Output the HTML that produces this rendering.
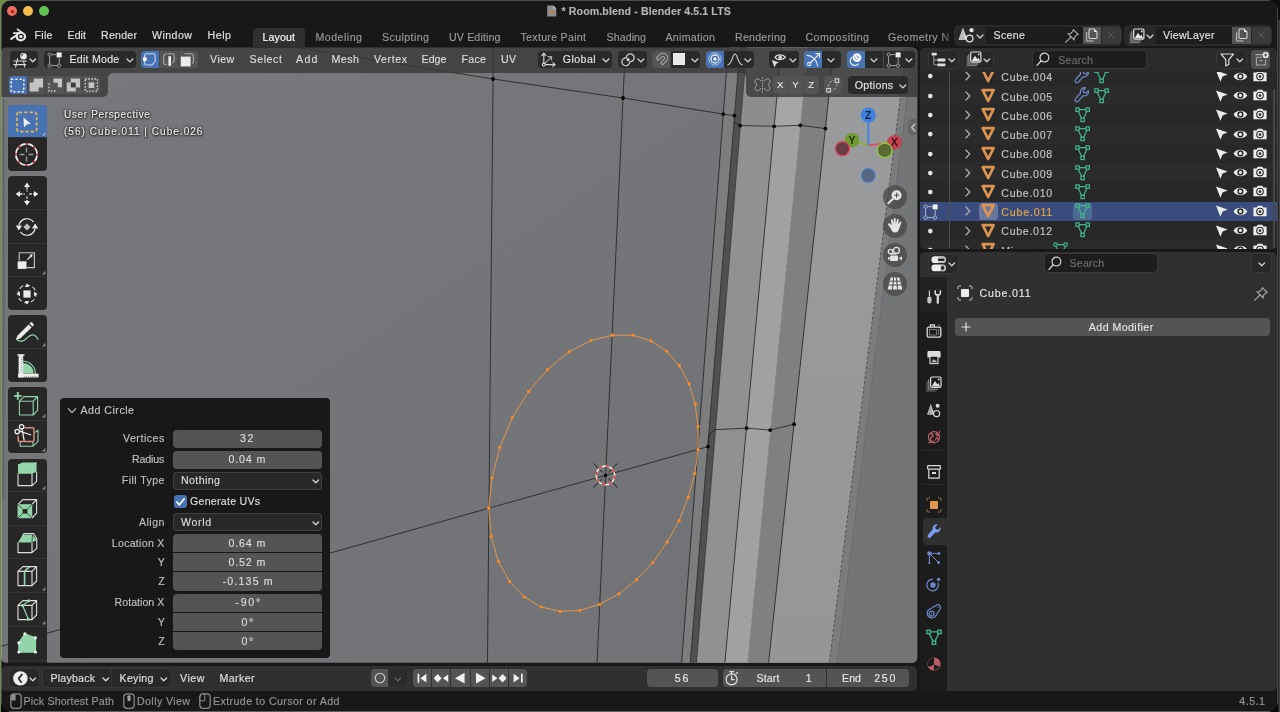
<!DOCTYPE html>
<html lang="en"><head><meta charset="utf-8"><title>Room.blend - Blender 4.5.1 LTS</title>
<style>
html,body{margin:0;padding:0;}
body{width:1280px;height:712px;overflow:hidden;position:relative;background:#15171c;font-family:"Liberation Sans",sans-serif;}
#desk{position:absolute;left:0;top:0;width:1280px;height:712px;background:linear-gradient(90deg,#718a4a 0,#718a4a 1px,rgba(0,0,0,0) 1px,rgba(0,0,0,0) 1278px,#2a2a2c 1278px,#2a2a2c 1279px,#44443e 1279px),linear-gradient(180deg,#718a4a 0,#718a4a 14px,#0a0a0a 14px,#0a0a0a 698px,#0a0a0a 698px);}
#desk2{position:absolute;left:640px;top:0;width:640px;height:20px;background:#0e0e0e;}
#win{position:absolute;left:0;top:0;width:1280px;height:712px;background:#181818;will-change:transform;clip-path:inset(0px 2px 0px 1px round 11px);overflow:hidden;}
#win div,#win span,#win svg{position:absolute;display:block;}
#win svg{overflow:visible;}
.t{white-space:nowrap;line-height:16px;height:16px;-webkit-text-stroke:0.14px;}
</style></head>
<body><div id="desk"></div><div id="desk2"></div><div id="win">
<svg style="left:0;top:0" width="1280" height="712" viewBox="0 0 1280 712"><defs><linearGradient id="gm" x1="0" y1="0" x2="1" y2="1"><stop offset="0" stop-color="#77787b"/><stop offset="1" stop-color="#717275"/></linearGradient><linearGradient id="gr" x1="0" y1="0" x2="0" y2="1"><stop offset="0" stop-color="#9a9b9c"/><stop offset="1" stop-color="#959697"/></linearGradient><clipPath id="vpc"><rect x="1" y="47.7" width="916.2" height="615.1" rx="5"/></clipPath></defs><g clip-path="url(#vpc)"><rect x="0" y="44" width="920" height="624" fill="url(#gm)"/><polygon points="728.6,44 740.3,44 689.8,668 681.2,668" fill="#7c7d7f" /><polygon points="740.3,44 747.0,44 696.0,668 689.8,668" fill="#505051" /><polygon points="747.0,44 781.7,44 724.4,668 696.0,668" fill="#909193" /><polygon points="781.7,44 808.2,44 746.9,668 724.4,668" fill="#a0a1a2" /><polygon points="808.2,44 834.4,44 768.1,668 746.9,668" fill="#7f8081" /><polygon points="834.4,44 907.0,44 828.6,668 768.1,668" fill="url(#gr)" /><polygon points="907.0,44 913.8,44 836.5,668 828.6,668" fill="#7b7c7e" /><polygon points="747.0,44 781.7,44 774.1,126.3 740.2,125.6" fill="#8c8d8f"/><polygon points="781.7,44 808.2,44 800.2,125.3 774.1,126.3" fill="#a4a5a6"/><polygon points="808.2,44 834.4,44 825.4,128.6 800.2,125.3" fill="#7b7c7d"/><polygon points="913.8,44 920,44 920,668 836.5,668" fill="#747576"/><rect x="1.4" y="99" width="3.8" height="402" rx="1.9" fill="#6a6b6d"/><line x1="493.4" y1="44" x2="487.4" y2="668" stroke="#1a1a1a" stroke-width="0.75" fill="none"/><line x1="625.5" y1="44" x2="596.8" y2="668" stroke="#1a1a1a" stroke-width="0.75" fill="none"/><line x1="728.6" y1="44" x2="681.2" y2="668" stroke="#1a1a1a" stroke-width="0.75" fill="none"/><line x1="781.7" y1="44" x2="724.4" y2="668" stroke="#1a1a1a" stroke-width="0.75" fill="none"/><line x1="834.4" y1="44" x2="768.1" y2="668" stroke="#1a1a1a" stroke-width="0.75" fill="none"/><line x1="740.3" y1="44" x2="689.8" y2="668" stroke="#2a2a2a" stroke-width="0.8" fill="none"/><line x1="747.0" y1="44" x2="696.0" y2="668" stroke="#333" stroke-width="0.8" fill="none"/><line x1="808.2" y1="44" x2="746.9" y2="668" stroke="#c8c8c8" stroke-width="0.8" stroke-dasharray="3 2" fill="none" opacity="0.38"/><line x1="907.0" y1="44" x2="828.6" y2="668" stroke="#454545" stroke-width="0.8" stroke-dasharray="2.6 2.4" fill="none"/><line x1="913.8" y1="44" x2="836.5" y2="668" stroke="#68696b" stroke-width="0.7" fill="none"/><polyline points="290,46.4 493,79 623,98 723.3,114.1 734.5,115.7" stroke="#1a1a1a" stroke-width="0.75" fill="none"/><polyline points="733.8,122.2 740.2,125.6 774.1,126.3 800.2,125.3 825.4,128.6" stroke="#1a1a1a" stroke-width="0.75" fill="none"/><polyline points="0,646.5 488.8,508.2 708,446.6 709.3,434.2 715.1,429.6 746.6,428.2 770.2,430.1 794.1,424.2" stroke="#1a1a1a" stroke-width="0.75" fill="none"/><circle cx="493" cy="79" r="1.9" fill="#000"/><circle cx="623" cy="98" r="1.9" fill="#000"/><circle cx="723.3" cy="114.1" r="1.9" fill="#000"/><circle cx="734.5" cy="115.7" r="1.9" fill="#000"/><circle cx="740.2" cy="125.6" r="1.9" fill="#000"/><circle cx="774.1" cy="126.3" r="1.9" fill="#000"/><circle cx="800.2" cy="125.3" r="1.9" fill="#000"/><circle cx="825.4" cy="128.6" r="1.9" fill="#000"/><circle cx="708" cy="446.6" r="1.9" fill="#000"/><circle cx="746.6" cy="428.2" r="1.9" fill="#000"/><circle cx="770.2" cy="430.1" r="1.9" fill="#000"/><circle cx="794.1" cy="424.2" r="1.9" fill="#000"/><line x1="608.7" y1="478.6" x2="617.5" y2="487.4" stroke="#1a1a1a" stroke-width="1"/><line x1="602.3" y1="478.6" x2="593.5" y2="487.4" stroke="#1a1a1a" stroke-width="1"/><line x1="602.3" y1="472.2" x2="593.5" y2="463.4" stroke="#1a1a1a" stroke-width="1"/><line x1="608.7" y1="472.2" x2="617.5" y2="463.4" stroke="#1a1a1a" stroke-width="1"/><circle cx="605.5" cy="475.4" r="9.3" fill="none" stroke="#f2f2f2" stroke-width="1.5"/><circle cx="605.5" cy="475.4" r="9.3" fill="none" stroke="#e8413a" stroke-width="1.5" stroke-dasharray="3.65 3.65"/><circle cx="605.5" cy="475.4" r="1.7" fill="#000"/><polygon points="612.2,335.2 632.7,335.2 651,340.9 666.6,351.1 679.3,365.7 689,383.7 695.2,404.2 698.1,426.5 698.1,449.7 694.8,473.6 688.2,497.3 679.1,520.7 667.1,542.2 652.7,562.7 636.6,579.7 619,593.8 599.6,604.4 579.9,610.3 560.2,611.4 541.2,607 524.2,597 509.6,581.6 498.4,561.5 491.2,536.4 488.8,508.2 492,477.8 499.8,447.5 512.1,417.8 528.8,391.3 547.7,369.3 569,351.8 591,340.5" fill="none" stroke="#e0964a" stroke-width="1" stroke-linejoin="round"/><circle cx="612.2" cy="335.2" r="1.6" fill="#ff8a1e"/><circle cx="632.7" cy="335.2" r="1.6" fill="#ff8a1e"/><circle cx="651" cy="340.9" r="1.6" fill="#ff8a1e"/><circle cx="666.6" cy="351.1" r="1.6" fill="#ff8a1e"/><circle cx="679.3" cy="365.7" r="1.6" fill="#ff8a1e"/><circle cx="689" cy="383.7" r="1.6" fill="#ff8a1e"/><circle cx="695.2" cy="404.2" r="1.6" fill="#ff8a1e"/><circle cx="698.1" cy="426.5" r="1.6" fill="#ff8a1e"/><circle cx="698.1" cy="449.7" r="1.6" fill="#ff8a1e"/><circle cx="694.8" cy="473.6" r="1.6" fill="#ff8a1e"/><circle cx="688.2" cy="497.3" r="1.6" fill="#ff8a1e"/><circle cx="679.1" cy="520.7" r="1.6" fill="#ff8a1e"/><circle cx="667.1" cy="542.2" r="1.6" fill="#ff8a1e"/><circle cx="652.7" cy="562.7" r="1.6" fill="#ff8a1e"/><circle cx="636.6" cy="579.7" r="1.6" fill="#ff8a1e"/><circle cx="619" cy="593.8" r="1.6" fill="#ff8a1e"/><circle cx="599.6" cy="604.4" r="1.6" fill="#ff8a1e"/><circle cx="579.9" cy="610.3" r="1.6" fill="#ff8a1e"/><circle cx="560.2" cy="611.4" r="1.6" fill="#ff8a1e"/><circle cx="541.2" cy="607" r="1.6" fill="#ff8a1e"/><circle cx="524.2" cy="597" r="1.6" fill="#ff8a1e"/><circle cx="509.6" cy="581.6" r="1.6" fill="#ff8a1e"/><circle cx="498.4" cy="561.5" r="1.6" fill="#ff8a1e"/><circle cx="491.2" cy="536.4" r="1.6" fill="#ff8a1e"/><circle cx="488.8" cy="508.2" r="1.6" fill="#ff8a1e"/><circle cx="492" cy="477.8" r="1.6" fill="#ff8a1e"/><circle cx="499.8" cy="447.5" r="1.6" fill="#ff8a1e"/><circle cx="512.1" cy="417.8" r="1.6" fill="#ff8a1e"/><circle cx="528.8" cy="391.3" r="1.6" fill="#ff8a1e"/><circle cx="547.7" cy="369.3" r="1.6" fill="#ff8a1e"/><circle cx="569" cy="351.8" r="1.6" fill="#ff8a1e"/><circle cx="591" cy="340.5" r="1.6" fill="#ff8a1e"/></g></svg>
<span class="t" style="left:64px;top:106.5px;font-size:10.04px;color:#f0f0f0;letter-spacing:0.637px;text-shadow:0 0 2px rgba(0,0,0,0.95),0 0 3px rgba(0,0,0,0.6),0.5px 1px 2px rgba(0,0,0,0.7);">User Perspective</span>
<span class="t" style="left:64px;top:124px;font-size:10.04px;color:#f0f0f0;letter-spacing:1.014px;text-shadow:0 0 2px rgba(0,0,0,0.95),0 0 3px rgba(0,0,0,0.6),0.5px 1px 2px rgba(0,0,0,0.7);">(56) Cube.011 | Cube.026</span>
<svg style="left:0;top:0" width="1280" height="712" viewBox="0 0 1280 712"><line x1="868.3" y1="145.3" x2="894.5" y2="142.4" stroke="#e4505e" stroke-width="1.8"/><line x1="868.3" y1="145.3" x2="851.9" y2="140.2" stroke="#86b832" stroke-width="1.8"/><line x1="868.3" y1="145.3" x2="868.3" y2="115.2" stroke="#3f86e6" stroke-width="1.8"/><circle cx="868.3" cy="175.5" r="6.9" fill="#596680" stroke="#4a80d2" stroke-width="1.1"/><circle cx="894.5" cy="142.4" r="7.3" fill="#c2414f"/><circle cx="851.9" cy="140.2" r="7.3" fill="#6d9b2c"/><circle cx="868.3" cy="115.2" r="7.6" fill="#3f82dd"/><circle cx="842.4" cy="148.7" r="7.1" fill="#693d45" stroke="#e4495c" stroke-width="1.2"/><circle cx="884.7" cy="150.3" r="7.3" fill="#5a6a35" stroke="#8fca3a" stroke-width="1.3"/><text x="868.3" y="119" text-anchor="middle" fill="#14233f" style="font-family:&quot;Liberation Sans&quot;,sans-serif;font-size:10.5px;font-weight:700;">Z</text><text x="851.9" y="144" text-anchor="middle" fill="#1f2f08" style="font-family:&quot;Liberation Sans&quot;,sans-serif;font-size:10.5px;font-weight:700;">Y</text><text x="894.6" y="146.2" text-anchor="middle" fill="#3d0d14" style="font-family:&quot;Liberation Sans&quot;,sans-serif;font-size:10.5px;font-weight:700;">X</text></svg>
<div style="left:883.2px;top:184.8px;width:24.2px;height:24.2px;background:rgba(72,72,72,0.74);border-radius:12.1px;"></div>
<div style="left:883.2px;top:213.8px;width:24.2px;height:24.2px;background:rgba(72,72,72,0.74);border-radius:12.1px;"></div>
<div style="left:883.2px;top:242.9px;width:24.2px;height:24.2px;background:rgba(72,72,72,0.74);border-radius:12.1px;"></div>
<div style="left:883.2px;top:271.7px;width:24.2px;height:24.2px;background:rgba(72,72,72,0.74);border-radius:12.1px;"></div>
<svg style="left:885.3px;top:186.9px;" width="20" height="20" viewBox="0 0 20 20"><circle cx="11.6" cy="8.2" r="5" fill="#e4e4e4"/><path d="M7.8 12 L3.2 16.4" stroke="#e4e4e4" stroke-width="2" stroke-linecap="round"/><path d="M11.6 5.6 V10.8 M9 8.2 H14.2" stroke="#4a4a4a" stroke-width="1"/></svg>
<svg style="left:885.3px;top:215.9px;" width="20" height="20" viewBox="0 0 20 20"><path d="M5.2 11.4 L3 8.8 a1.1 1.1 0 0 1 1.7 -1.3 L6.6 9.2 L6 4.2 a0.9 0.9 0 0 1 1.8 -0.2 L8.6 8 L8.8 2.8 a0.9 0.9 0 0 1 1.8 0 L10.8 8 L12 3.6 a0.9 0.9 0 0 1 1.8 0.4 L13 8.6 L14.8 6 a0.9 0.9 0 0 1 1.6 0.8 L14.4 12 C13.6 15 12.4 16.6 10 16.6 C7.6 16.6 6.4 14.2 5.2 11.4z" fill="#e4e4e4"/></svg>
<svg style="left:885.3px;top:245px;" width="20" height="20" viewBox="0 0 20 20"><g fill="none" stroke="#e4e4e4" stroke-width="1.3"><circle cx="5.6" cy="6.6" r="2.3"/><circle cx="11.4" cy="5.4" r="3"/><path d="M5.6 9 H11.4"/></g><rect x="5" y="10.6" width="8" height="5.4" rx="1" fill="#e4e4e4"/><path d="M13.8 13.2 L17 11.2 V15.4z" fill="#e4e4e4"/><rect x="3" y="12" width="1.6" height="2.6" fill="#e4e4e4"/></svg>
<svg style="left:885.3px;top:273.8px;" width="20" height="20" viewBox="0 0 20 20"><path d="M5.6 3.6 H14.4 L17.4 15.6 H2.6z" fill="#e4e4e4"/><path d="M8.6 3.6 L7.4 15.6 M11.4 3.6 L12.6 15.6 M4.8 7.2 H15.2 M3.8 11 H16.2" stroke="#4a4a4a" stroke-width="1"/></svg>
<div style="left:908.4px;top:118.7px;width:8.8px;height:16.6px;background:rgba(100,100,100,0.85);border-radius:4px 0 0 4px;"></div>
<svg style="left:909.6px;top:122.5px;" width="7" height="9" viewBox="0 0 7 9"><path d="M5 1 L1.6 4.5 L5 8" fill="none" stroke="#c9c9c9" stroke-width="1.2" stroke-linecap="round" stroke-linejoin="round"/></svg>
<div style="left:1.3px;top:47.6px;width:915.8px;height:25.8px;background:rgba(56,56,56,0.8);border-radius:5px 5px 0 0;"></div>
<div style="left:1.3px;top:73.4px;width:107px;height:23.2px;background:rgba(56,56,56,0.8);border-radius:0 0 5px 0;"></div>
<div style="left:745.6px;top:73.4px;width:171.5px;height:23.2px;background:rgba(56,56,56,0.8);border-radius:0 0 0 5px;"></div>
<div style="left:108.3px;top:73.4px;width:5px;height:5px;background:radial-gradient(circle at 100% 100%,rgba(0,0,0,0) 4.6px,rgba(56,56,56,0.8) 5.2px);"></div>
<div style="left:740.6px;top:73.4px;width:5px;height:5px;background:radial-gradient(circle at 0% 100%,rgba(0,0,0,0) 4.6px,rgba(56,56,56,0.8) 5.2px);"></div>
<div style="left:9.75px;top:50.9px;width:28.4px;height:17px;background:#2a2a2a;border-radius:4px;"></div>
<svg style="left:12.5px;top:51.5px;" width="17" height="16" viewBox="0 0 17 16"><g stroke="#d9d9d9" stroke-width="1.1" fill="none" stroke-linecap="round"><path d="M1 9 H13.4 M0.6 12.6 H12.8 M4.6 6.6 L2.6 15 M10.6 9 L11.6 15"/></g><circle cx="10.5" cy="4.3" r="3.3" fill="#e8e8e8"/><path d="M8.4 4.4 A2.2 2.2 0 0 1 10.4 2.2" stroke="#2a2a2a" stroke-width="0.9" fill="none"/></svg>
<svg style="left:29px;top:57.8px;" width="7.6" height="4.8" viewBox="0 0 7.6 4.8"><path d="M1 1 L3.8 3.8 L6.6 1" fill="none" stroke="#d8d8d8" stroke-width="1.3" stroke-linecap="round" stroke-linejoin="round"/></svg>
<div style="left:44.4px;top:50.9px;width:91.2px;height:17px;background:#2a2a2a;border-radius:4px;"></div>
<svg style="left:46.5px;top:52px;" width="16" height="16" viewBox="0 0 16 16"><g fill="none" stroke="#a6a6a6" stroke-width="0.95"><path d="M2.6 4.3 V11.9 M4.3 13.6 H10.3 M12.2 6 V11.9 M4.3 2.6 H9"/><circle cx="2.6" cy="2.6" r="1.6"/><circle cx="2.6" cy="13.6" r="1.6"/><circle cx="12" cy="13.6" r="1.6"/></g><rect x="9.6" y="0.4" width="5" height="5" fill="#f2f2f2"/></svg>
<span class="t" style="left:69.5px;top:51.4px;font-size:10.62px;color:#e4e4e4;letter-spacing:0.248px;">Edit Mode</span>
<svg style="left:126.3px;top:57.75px;" width="7.8" height="4.9" viewBox="0 0 7.8 4.9"><path d="M1 1 L3.9 3.9 L6.8 1" fill="none" stroke="#d8d8d8" stroke-width="1.3" stroke-linecap="round" stroke-linejoin="round"/></svg>
<div style="left:141.3px;top:50.9px;width:17.8px;height:17px;background:#4772b3;border-radius:4px 0 0 4px;"></div>
<div style="left:159.6px;top:50.9px;width:18.4px;height:17px;background:#545454;"></div>
<div style="left:178.5px;top:50.9px;width:19px;height:17px;background:#545454;border-radius:0 4px 4px 0;"></div>
<svg style="left:143.2px;top:53px;" width="14" height="13" viewBox="0 0 14 13"><path d="M3.2 0.8 H10.6 a1.6 1.6 0 0 1 1.6 1.6 V8.6 L9 12 H3.2 a1.6 1.6 0 0 1 -1.6 -1.6 V2.4 a1.6 1.6 0 0 1 1.6 -1.6z" fill="none" stroke="#c9d6ec" stroke-width="1.1"/><rect x="0" y="4.4" width="3.6" height="3.6" fill="#fff"/></svg>
<svg style="left:161.5px;top:53px;" width="14" height="13" viewBox="0 0 14 13"><path d="M5.4 0.8 H10.6 a1.6 1.6 0 0 1 1.6 1.6 V7.6 L10.6 10.2 M4.6 11.4 H3.2 a1.6 1.6 0 0 1 -1.6 -1.6 V4 A3.2 3.2 0 0 1 4.8 0.8" fill="none" stroke="#a8a8a8" stroke-width="1.1"/><rect x="6.4" y="3.2" width="2.6" height="9.6" fill="#f4f4f4"/></svg>
<svg style="left:180.4px;top:52.6px;" width="15" height="14" viewBox="0 0 15 14"><path d="M4.6 0.8 H11.8 a1.6 1.6 0 0 1 1.6 1.6 V9 L12 10.4" fill="none" stroke="#a8a8a8" stroke-width="1.1"/><rect x="0.8" y="3.6" width="9.8" height="9.8" fill="#ececec"/></svg>
<span class="t" style="left:210px;top:51.3px;font-size:10.62px;color:#dedede;letter-spacing:0.491px;">View</span>
<span class="t" style="left:249.5px;top:51.3px;font-size:10.62px;color:#dedede;letter-spacing:0.597px;">Select</span>
<span class="t" style="left:296px;top:51.3px;font-size:10.62px;color:#dedede;letter-spacing:1.302px;">Add</span>
<span class="t" style="left:331.5px;top:51.3px;font-size:10.62px;color:#dedede;letter-spacing:0.510px;">Mesh</span>
<span class="t" style="left:374px;top:51.3px;font-size:10.62px;color:#dedede;letter-spacing:0.578px;">Vertex</span>
<span class="t" style="left:421.5px;top:51.3px;font-size:10.62px;color:#dedede;letter-spacing:0.066px;">Edge</span>
<span class="t" style="left:461.5px;top:51.3px;font-size:10.62px;color:#dedede;letter-spacing:0.297px;">Face</span>
<span class="t" style="left:501px;top:51.3px;font-size:10.62px;color:#dedede;letter-spacing:0.247px;">UV</span>
<div style="left:538.1px;top:50.9px;width:73.8px;height:17px;background:#2a2a2a;border-radius:4px;"></div>
<svg style="left:541px;top:52px;" width="16" height="16" viewBox="0 0 16 16"><g fill="none" stroke="#d6d6d6" stroke-width="1.1" stroke-linecap="round" stroke-linejoin="round"><path d="M2.8 12.6 V1.6 M0.8 3.6 L2.8 1.2 L4.8 3.6 M2.8 12.6 H14 M11.8 10.6 L14.2 12.6 L11.8 14.6"/><path d="M3.6 11.8 L10.2 5.2 M7 4.6 H10.6 V8.2" stroke="#a8a8a8"/><circle cx="2.8" cy="12.6" r="1.5" fill="#2a2a2a"/></g></svg>
<span class="t" style="left:562.8px;top:51.4px;font-size:10.62px;color:#e4e4e4;letter-spacing:0.420px;">Global</span>
<svg style="left:602.4px;top:57.75px;" width="7.8" height="4.9" viewBox="0 0 7.8 4.9"><path d="M1 1 L3.9 3.9 L6.8 1" fill="none" stroke="#d8d8d8" stroke-width="1.3" stroke-linecap="round" stroke-linejoin="round"/></svg>
<div style="left:617.5px;top:50.9px;width:29px;height:17px;background:#2a2a2a;border-radius:4px;"></div>
<svg style="left:620px;top:52px;" width="16" height="16" viewBox="0 0 16 16"><g fill="none" stroke="#d6d6d6" stroke-width="1.2"><path d="M6.2 6 A3.9 3.9 0 1 0 9.6 9.4"/><path d="M9.8 9.6 A3.9 3.9 0 1 0 6.4 6.2"/></g><circle cx="8.1" cy="7.7" r="1.4" fill="#fff"/></svg>
<svg style="left:637.1px;top:57.75px;" width="7.8" height="4.9" viewBox="0 0 7.8 4.9"><path d="M1 1 L3.9 3.9 L6.8 1" fill="none" stroke="#d8d8d8" stroke-width="1.3" stroke-linecap="round" stroke-linejoin="round"/></svg>
<div style="left:651.9px;top:50.9px;width:18.3px;height:17px;background:#545454;border-radius:4px 0 0 4px;"></div>
<div style="left:670.6px;top:50.9px;width:29.4px;height:17px;background:#2a2a2a;border-radius:0 4px 4px 0;"></div>
<svg style="left:653.5px;top:52.4px;" width="15" height="14" viewBox="0 0 15 14"><path d="M2 6.2 L5.8 2.6 A4.6 4.6 0 0 1 12.4 9 L8.6 12.8 L6.6 10.8 L10.2 7.2 A1.7 1.7 0 0 0 7.8 4.8 L4 8.4z" fill="none" stroke="#a6a6a6" stroke-width="1.1" stroke-linejoin="round"/></svg>
<div style="left:672.8px;top:53px;width:12.2px;height:11.7px;background:#e9e9e9;"></div>
<svg style="left:690.7px;top:57.75px;" width="7.8" height="4.9" viewBox="0 0 7.8 4.9"><path d="M1 1 L3.9 3.9 L6.8 1" fill="none" stroke="#d8d8d8" stroke-width="1.3" stroke-linecap="round" stroke-linejoin="round"/></svg>
<div style="left:706px;top:50.9px;width:17.7px;height:17px;background:#4772b3;border-radius:4px 0 0 4px;"></div>
<div style="left:724.1px;top:50.9px;width:30px;height:17px;background:#2a2a2a;border-radius:0 4px 4px 0;"></div>
<svg style="left:707.8px;top:52.4px;" width="14" height="14" viewBox="0 0 14 14"><circle cx="7" cy="7" r="6.2" fill="none" stroke="#b7c9e8" stroke-width="0.9"/><circle cx="7" cy="7" r="4" fill="none" stroke="#e8eefa" stroke-width="1.3"/><circle cx="7" cy="7" r="1.7" fill="#fff"/></svg>
<svg style="left:726.5px;top:53px;" width="16" height="13" viewBox="0 0 16 13"><path d="M0.8 11.8 C5 11.8 5.4 1 8 1 C10.6 1 11 11.8 15.2 11.8" fill="none" stroke="#d6d6d6" stroke-width="1.1" stroke-linecap="round"/></svg>
<svg style="left:744.1px;top:57.75px;" width="7.8" height="4.9" viewBox="0 0 7.8 4.9"><path d="M1 1 L3.9 3.9 L6.8 1" fill="none" stroke="#d8d8d8" stroke-width="1.3" stroke-linecap="round" stroke-linejoin="round"/></svg>
<div style="left:769.4px;top:50.9px;width:29.2px;height:17px;background:#2a2a2a;border-radius:4px;"></div>
<svg style="left:771px;top:51.6px;" width="18" height="17" viewBox="0 0 18 17"><path d="M4 5.2 C6 2 12 2 14.4 5.2 C12 8.4 6 8.4 4 5.2z" fill="none" stroke="#e0e0e0" stroke-width="1.2"/><circle cx="9.2" cy="5.2" r="1.7" fill="#e0e0e0"/><path d="M0.8 8 L8 10.6 L5 11.8 L3.6 15.4z" fill="#e0e0e0"/></svg>
<svg style="left:788.9px;top:57.75px;" width="7.8" height="4.9" viewBox="0 0 7.8 4.9"><path d="M1 1 L3.9 3.9 L6.8 1" fill="none" stroke="#d8d8d8" stroke-width="1.3" stroke-linecap="round" stroke-linejoin="round"/></svg>
<div style="left:804px;top:50.9px;width:17.9px;height:17px;background:#4772b3;border-radius:4px 0 0 4px;"></div>
<div style="left:822.3px;top:50.9px;width:19px;height:17px;background:#2a2a2a;border-radius:0 4px 4px 0;"></div>
<svg style="left:805.6px;top:52px;" width="15" height="15" viewBox="0 0 15 15"><g fill="none" stroke="#e6ecf8" stroke-width="1.1" stroke-linecap="round" stroke-linejoin="round"><path d="M1.2 3.4 C6 3.4 11 8 11.6 13.6"/><path d="M4.2 11 L13.4 1.8 M9.8 1.6 H13.6 V5.4"/><circle cx="3.2" cy="12" r="1.6" fill="#4772b3"/></g></svg>
<svg style="left:827.4px;top:57.75px;" width="7.8" height="4.9" viewBox="0 0 7.8 4.9"><path d="M1 1 L3.9 3.9 L6.8 1" fill="none" stroke="#d8d8d8" stroke-width="1.3" stroke-linecap="round" stroke-linejoin="round"/></svg>
<div style="left:846.6px;top:50.9px;width:18px;height:17px;background:#4772b3;border-radius:4px 0 0 4px;"></div>
<div style="left:865px;top:50.9px;width:18px;height:17px;background:#2a2a2a;"></div>
<div style="left:883.5px;top:50.9px;width:31px;height:17px;background:#2a2a2a;border-radius:0 4px 4px 0;"></div>
<svg style="left:848.3px;top:52px;" width="15" height="15" viewBox="0 0 15 15"><circle cx="9" cy="5.6" r="4.4" fill="#f2f5fb"/><path d="M4.4 5 A4.6 4.6 0 1 0 10.6 11.6" fill="none" stroke="#e6ecf8" stroke-width="1.2"/><path d="M6.6 5.4 L8.8 7.6 M8.6 3.6 L11 6" stroke="#4772b3" stroke-width="1"/></svg>
<svg style="left:870.1px;top:57.75px;" width="7.8" height="4.9" viewBox="0 0 7.8 4.9"><path d="M1 1 L3.9 3.9 L6.8 1" fill="none" stroke="#d8d8d8" stroke-width="1.3" stroke-linecap="round" stroke-linejoin="round"/></svg>
<svg style="left:885.5px;top:52px;" width="16" height="16" viewBox="0 0 16 16"><g fill="none" stroke="#a6a6a6" stroke-width="0.95"><path d="M2.6 4.3 V11.9 M4.3 13.6 H10.3 M12.2 6 V11.9 M4.3 2.6 H9"/><circle cx="2.6" cy="2.6" r="1.6"/><circle cx="2.6" cy="13.6" r="1.6"/><circle cx="12" cy="13.6" r="1.6"/></g><rect x="9.6" y="0.4" width="5" height="5" fill="#f2f2f2"/></svg>
<svg style="left:904.5px;top:57.75px;" width="7.8" height="4.9" viewBox="0 0 7.8 4.9"><path d="M1 1 L3.9 3.9 L6.8 1" fill="none" stroke="#d8d8d8" stroke-width="1.3" stroke-linecap="round" stroke-linejoin="round"/></svg>
<div style="left:9px;top:76.3px;width:18.2px;height:17.5px;background:#4772b3;border-radius:4px 0 0 4px;"></div>
<div style="left:27.8px;top:76.3px;width:17.6px;height:17.5px;background:#545454;"></div>
<div style="left:46.2px;top:76.3px;width:17.6px;height:17.5px;background:#545454;"></div>
<div style="left:64.6px;top:76.3px;width:17.6px;height:17.5px;background:#545454;"></div>
<div style="left:83px;top:76.3px;width:17.2px;height:17.5px;background:#545454;border-radius:0 4px 4px 0;"></div>
<svg style="left:10.4px;top:77.6px;" width="15" height="15" viewBox="0 0 15 15"><rect x="1.2" y="1.2" width="12.6" height="12.6" stroke="#f0f0f0" stroke-width="1.6" stroke-dasharray="2.1 2.1" fill="none"/></svg>
<svg style="left:29px;top:78px;" width="15" height="14" viewBox="0 0 15 14"><path d="M4.6 0.6 H14 V9.4 H9.6 V13.6 H0.6 V4.6 H4.6z" fill="#c4c4c4"/></svg>
<svg style="left:47.6px;top:78px;" width="15" height="14" viewBox="0 0 15 14"><path d="M5.4 0.6 H14 V9.2 H9.8 V4.8 H5.4z" fill="#c4c4c4"/><path d="M1 5.6 V13 H8.6" stroke="#d6d6d6" stroke-width="1.3" stroke-dasharray="1.5 1.6" fill="none"/></svg>
<svg style="left:66px;top:78px;" width="15" height="14" viewBox="0 0 15 14"><path d="M4.8 0.6 H14 V9.4 H9.8 V13.6 H0.8 V4.6 H4.8z" fill="#c4c4c4"/><rect x="4.8" y="4.6" width="5" height="4.8" fill="#3d3d3d"/></svg>
<svg style="left:84px;top:78px;" width="15" height="14" viewBox="0 0 15 14"><rect x="1.2" y="1" width="12.2" height="12.2" stroke="#d6d6d6" stroke-width="1.3" stroke-dasharray="1.5 1.6" fill="none"/><rect x="4.6" y="4.4" width="5.6" height="5.6" fill="#c4c4c4"/></svg>
<svg style="left:753.5px;top:77px;" width="17" height="16" viewBox="0 0 17 16"><g fill="none" stroke="#a9a9a9" stroke-width="1" stroke-linejoin="round"><path d="M6.8 4.2 C5 0.6 0.8 1.6 1 4.4 C1.2 6 2.6 6.6 2.6 7.8 C2.6 9 1 9.6 1.2 11.6 C1.6 14.6 5.6 14.2 6.8 11.2"/><path d="M10.2 4.2 C12 0.6 16.2 1.6 16 4.4 C15.8 6 14.4 6.6 14.4 7.8 C14.4 9 16 9.6 15.8 11.6 C15.4 14.6 11.4 14.2 10.2 11.2"/><path d="M8.5 0 V16" stroke-dasharray="1.6 1.2"/></g></svg>
<div style="left:772.8px;top:76.3px;width:14.5px;height:17.7px;background:#545454;border-radius:4px 0 0 4px;"></div>
<div style="left:788.2px;top:76.3px;width:14.6px;height:17.7px;background:#545454;"></div>
<div style="left:803.7px;top:76.3px;width:15.1px;height:17.7px;background:#545454;border-radius:0 4px 4px 0;"></div>
<span class="t" style="left:776.982px;top:76.8px;font-size:9.65px;color:#e6e6e6;">X</span>
<span class="t" style="left:792.282px;top:76.8px;font-size:9.65px;color:#e6e6e6;">Y</span>
<span class="t" style="left:808.253px;top:76.8px;font-size:9.65px;color:#e6e6e6;">Z</span>
<div style="left:824.4px;top:76.3px;width:17.2px;height:17.7px;background:#545454;border-radius:4px;"></div>
<svg style="left:826px;top:77.6px;" width="14" height="15" viewBox="0 0 14 15"><rect x="9.2" y="0.8" width="3.6" height="3.6" fill="none" stroke="#e6e6e6" stroke-width="1"/><rect x="0.8" y="10.4" width="3.6" height="3.6" fill="none" stroke="#e6e6e6" stroke-width="1"/><path d="M2.4 8.6 C2.4 4.6 5 2.6 8 2.6 M11 6 C11 10 8.6 12.2 5.6 12.2" fill="none" stroke="#a6a6a6" stroke-width="1.1" stroke-dasharray="2.4 1.8"/></svg>
<div style="left:847.5px;top:76.3px;width:60.5px;height:17.7px;background:#2a2a2a;border-radius:4px;"></div>
<span class="t" style="left:854.8px;top:76.8px;font-size:10.62px;color:#e4e4e4;letter-spacing:0.300px;">Options</span>
<svg style="left:899.1px;top:83.55px;" width="7.8" height="4.9" viewBox="0 0 7.8 4.9"><path d="M1 1 L3.9 3.9 L6.8 1" fill="none" stroke="#d8d8d8" stroke-width="1.3" stroke-linecap="round" stroke-linejoin="round"/></svg>
<div style="left:8.3px;top:104.6px;width:38.5px;height:66.7px;background:#272727;border-radius:4px;"></div>
<div style="left:8.3px;top:136.8px;width:38.5px;height:0.9px;background:#343434;"></div>
<div style="left:8.3px;top:176.4px;width:38.5px;height:133.6px;background:#272727;border-radius:4px;"></div>
<div style="left:8.3px;top:209px;width:38.5px;height:0.9px;background:#343434;"></div>
<div style="left:8.3px;top:242.8px;width:38.5px;height:0.9px;background:#343434;"></div>
<div style="left:8.3px;top:276.2px;width:38.5px;height:0.9px;background:#343434;"></div>
<div style="left:8.3px;top:315.3px;width:38.5px;height:66.7px;background:#272727;border-radius:4px;"></div>
<div style="left:8.3px;top:348.2px;width:38.5px;height:0.9px;background:#343434;"></div>
<div style="left:8.3px;top:387px;width:38.5px;height:66.4px;background:#272727;border-radius:4px;"></div>
<div style="left:8.3px;top:419.6px;width:38.5px;height:0.9px;background:#343434;"></div>
<div style="left:8.3px;top:458.6px;width:38.5px;height:204.3px;background:#272727;border-radius:4px 4px 0 0;"></div>
<div style="left:8.3px;top:491.4px;width:38.5px;height:0.9px;background:#343434;"></div>
<div style="left:8.3px;top:524.8px;width:38.5px;height:0.9px;background:#343434;"></div>
<div style="left:8.3px;top:558.4px;width:38.5px;height:0.9px;background:#343434;"></div>
<div style="left:8.3px;top:592.2px;width:38.5px;height:0.9px;background:#343434;"></div>
<div style="left:8.3px;top:625.8px;width:38.5px;height:0.9px;background:#343434;"></div>
<div style="left:8.3px;top:659.8px;width:38.5px;height:0.9px;background:#343434;"></div>
<div style="left:8.3px;top:104.6px;width:38.5px;height:32.8px;background:#4772b3;border-radius:4px 4px 0 0;"></div>
<svg style="left:41.4px;top:130.9px;" width="5" height="5" viewBox="0 0 5 5"><path d="M4.4 0.8 V4.4 H0.8z" fill="#8fa7d4"/></svg>
<svg style="left:41.4px;top:270px;" width="5" height="5" viewBox="0 0 5 5"><path d="M4.4 0.8 V4.4 H0.8z" fill="#808080"/></svg>
<svg style="left:41.4px;top:342px;" width="5" height="5" viewBox="0 0 5 5"><path d="M4.4 0.8 V4.4 H0.8z" fill="#808080"/></svg>
<svg style="left:41.4px;top:413.4px;" width="5" height="5" viewBox="0 0 5 5"><path d="M4.4 0.8 V4.4 H0.8z" fill="#808080"/></svg>
<svg style="left:41.4px;top:446.8px;" width="5" height="5" viewBox="0 0 5 5"><path d="M4.4 0.8 V4.4 H0.8z" fill="#808080"/></svg>
<svg style="left:41.4px;top:485.2px;" width="5" height="5" viewBox="0 0 5 5"><path d="M4.4 0.8 V4.4 H0.8z" fill="#808080"/></svg>
<svg style="left:41.4px;top:586px;" width="5" height="5" viewBox="0 0 5 5"><path d="M4.4 0.8 V4.4 H0.8z" fill="#808080"/></svg>
<svg style="left:41.4px;top:619.6px;" width="5" height="5" viewBox="0 0 5 5"><path d="M4.4 0.8 V4.4 H0.8z" fill="#808080"/></svg>
<svg style="left:14px;top:109px;" width="27" height="27" viewBox="0 0 27 27"><rect x="3" y="3.4" width="19.6" height="19.2" rx="2" fill="none" stroke="#ecb94a" stroke-width="1.7" stroke-dasharray="3.2 2.1"/><path d="M9.4 8.2 L16.8 14.8 L12.6 15.4 L10 18.6z" fill="#ececec"/></svg>
<svg style="left:14px;top:142.3px;" width="26" height="26" viewBox="0 0 26 26"><circle cx="12.5" cy="12.5" r="10.6" fill="none" stroke="#f4f4f4" stroke-width="1.7"/><circle cx="12.5" cy="12.5" r="10.6" fill="none" stroke="#b03a38" stroke-width="1.7" stroke-dasharray="3.1 5.225" stroke-dashoffset="1.5"/><path d="M12.5 5.6 V10.4 M12.5 14.6 V19.4 M5.6 12.5 H10.4 M14.6 12.5 H19.4" stroke="#9a9a9a" stroke-width="1.3" fill="none"/></svg>
<svg style="left:14.5px;top:181.5px;" width="24" height="24" viewBox="0 0 24 24"><g fill="#ececec"><path d="M12 0.6 L15 5 H9z M12 23.4 L15 19 H9z M0.6 12 L5 9 V15z M23.4 12 L19 9 V15z"/></g><path d="M12 5 V9.6 M12 14.4 V19 M5 12 H9.6 M14.4 12 H19" stroke="#ececec" stroke-width="1.3" stroke-dasharray="2.4 1.2" fill="none"/></svg>
<svg style="left:14.5px;top:214.7px;" width="24" height="24" viewBox="0 0 24 24"><path d="M4 10 A8.3 8.3 0 0 1 18.6 7" fill="none" stroke="#ececec" stroke-width="1.2"/><path d="M20 14 A8.3 8.3 0 0 1 5.4 17" fill="none" stroke="#ececec" stroke-width="1.2"/><path d="M0.8 10.6 H7 L3.9 15.4z M17 13.4 H23.2 L20.1 8.6z" fill="#ececec"/><path d="M12 8.4 L15.6 12 L12 15.6 L8.4 12z" fill="#bdbdbd"/></svg>
<svg style="left:15px;top:250px;" width="24" height="22" viewBox="0 0 24 22"><path d="M4.2 10.4 V2.8 H19.4 V17.6 H11.6" fill="none" stroke="#c8c8c8" stroke-width="1.1"/><rect x="2.7" y="11.3" width="8.8" height="7.6" fill="#ececec"/><path d="M12.4 9.6 L16 6" stroke="#ececec" stroke-width="1.2"/><path d="M17.6 4 L17 7.4 L14.4 4.8z" fill="#ececec"/></svg>
<svg style="left:14.5px;top:282.2px;" width="24" height="24" viewBox="0 0 24 24"><circle cx="12" cy="12" r="9" fill="none" stroke="#d6d6d6" stroke-width="1.1" stroke-dasharray="4.3 2.77" stroke-dashoffset="-5.6"/><rect x="8.4" y="8.4" width="7.2" height="7.2" fill="#ececec"/><path d="M12 1.6 L14.2 5 H9.8z M12 22.4 L14.2 19 H9.8z M1.6 12 L5 9.8 V14.2z M22.4 12 L19 9.8 V14.2z" fill="#ececec"/></svg>
<svg style="left:14px;top:320px;" width="27" height="24" viewBox="0 0 27 24"><path d="M2 18.6 C6 23.4 10 21 13.4 17.6 C17 14 21 13.4 24.2 19.6" fill="none" stroke="#92d5a9" stroke-width="1.3"/><path d="M3.4 15.8 L14.6 4.4 L17.6 7.4 L6.2 18.6 L2 19.6z" fill="#ececec"/><path d="M15.4 3.6 L16.6 2.4 a1 1 0 0 1 1.4 0 L19.6 4 a1 1 0 0 1 0 1.4 L18.4 6.6z" fill="#ececec"/></svg>
<svg style="left:16px;top:353px;" width="24" height="26" viewBox="0 0 24 26"><path d="M7 20.6 V10 A10.4 10.4 0 0 1 17.6 20.6z" fill="#92d5a9"/><path d="M7 8.2 A12.2 12.2 0 0 1 19.4 20.6" fill="none" stroke="#92d5a9" stroke-width="1.1"/><rect x="2.6" y="2" width="4.6" height="22.4" fill="#ececec"/><rect x="1.4" y="1.2" width="7" height="1.4" fill="#ececec"/><rect x="2" y="20.6" width="20.6" height="3.8" fill="#ececec"/><path d="M5.6 4 V20 " stroke="#9a9a9a" stroke-width="1.6" stroke-dasharray="0.8 1.2"/><path d="M8 23.6 H22" stroke="#9a9a9a" stroke-width="1.4" stroke-dasharray="0.8 1.2"/></svg>
<svg style="left:14.2px;top:391.8px;" width="26" height="25" viewBox="0 0 26 25"><g fill="none" stroke="#92d5a9" stroke-width="1.1" stroke-linejoin="round"><rect x="5.4" y="9.2" width="13.8" height="13.8"/><path d="M5.4 9.2 L9.8 4.6 H23.6 L19.2 9.2 M23.6 4.6 V18.4 L19.2 23"/></g><path d="M3.8 0 V7.8 M0 3.9 H7.6" stroke="#92d5a9" stroke-width="1.9"/></svg>
<svg style="left:13.5px;top:424px;" width="28" height="26" viewBox="0 0 28 26"><g fill="none" stroke="#92d5a9" stroke-width="1.1" stroke-linejoin="round"><path d="M6.2 17.2 V22.2 H19 L24 17.4 V6.2 L20.6 8.6"/><path d="M19 22.2 V17.6"/></g><path d="M10.6 3.8 H18.4 a1.6 1.6 0 0 1 1.6 1.6 V16 a1.6 1.6 0 0 1 -1.6 1.6 H5.8 a1.6 1.6 0 0 1 -1.6 -1.6 V11.8" fill="none" stroke="#d98c80" stroke-width="1.5"/><g fill="none" stroke="#ececec" stroke-width="1.4"><circle cx="7.6" cy="2.8" r="2.2"/><circle cx="3.2" cy="7.6" r="2.2"/></g><path d="M8 5 L10.2 16.6 M5.4 7.2 L17.2 11" stroke="#ececec" stroke-width="1.3"/></svg>
<svg style="left:14.5px;top:461.5px;" width="26" height="26" viewBox="0 0 26 26"><path d="M3 11.8 V2.6 L7.6 0.6 H21.6 V9.8 L17 11.8z" fill="#92d5a9"/><path d="M3 2.8 H17 L21.6 0.6 M17 2.8 V11.8" stroke="#a4e4b9" stroke-width="0.6" fill="none"/><g fill="none" stroke="#dedede" stroke-width="1.1" stroke-linejoin="round"><path d="M3 11.8 V23.6 H17 V11.8 M17 23.6 L21.6 19.4 V9.8"/></g></svg>
<svg style="left:14.5px;top:495px;" width="26" height="26" viewBox="0 0 26 26"><g fill="none" stroke="#dedede" stroke-width="1.1" stroke-linejoin="round"><path d="M3 9.4 L7.8 4.6 H21.6 L17 9.4 M21.6 4.6 V18.2 L17 23"/></g><rect x="2.6" y="9.2" width="14.6" height="14" fill="#92d5a9"/><rect x="7.6" y="14" width="4.8" height="4.6" fill="#272727"/><path d="M2.6 9.2 L7.6 14 M17.2 9.2 L12.4 14 M2.6 23.2 L7.6 18.6 M17.2 23.2 L12.4 18.6" stroke="#272727" stroke-width="0.8"/></svg>
<svg style="left:14.5px;top:528.6px;" width="26" height="26" viewBox="0 0 26 26"><path d="M3 13.6 L7.6 5.8 H17.4 L21.8 11 L17 13.6z" fill="#92d5a9"/><path d="M17.4 5.8 L17 13.6" stroke="#272727" stroke-width="0.7"/><g fill="none" stroke="#dedede" stroke-width="1.1" stroke-linejoin="round"><path d="M7.6 5.8 L9 4.6 H18.6 L21.8 9.8 V19.4 L17 23.6 H3 V13.6 M17 23.6 V13.6"/></g></svg>
<svg style="left:14.5px;top:562.4px;" width="26" height="26" viewBox="0 0 26 26"><g fill="none" stroke="#dedede" stroke-width="1.1" stroke-linejoin="round"><rect x="3" y="9.4" width="14" height="14.2"/><path d="M3 9.4 L7.8 4.6 H21.6 L17 9.4 M21.6 4.6 V19 L17 23.6"/></g><path d="M9.6 23.6 V9.4 L14.6 4.6" fill="none" stroke="#92d5a9" stroke-width="1.7"/></svg>
<svg style="left:14.5px;top:596px;" width="26" height="26" viewBox="0 0 26 26"><g fill="none" stroke="#dedede" stroke-width="1.1" stroke-linejoin="round"><rect x="3" y="9.4" width="14" height="14.2"/><path d="M3 9.4 L7.8 4.6 H21.6 L17 9.4 M21.6 4.6 V19 L17 23.6"/></g><path d="M13.8 4.8 L7.6 9.6 L13.4 23.2" fill="none" stroke="#92d5a9" stroke-width="1.2"/><circle cx="13.8" cy="4.8" r="1.5" fill="#92d5a9"/><circle cx="7.6" cy="9.6" r="1.5" fill="#92d5a9"/><circle cx="13.4" cy="23.2" r="1.5" fill="#92d5a9"/></svg>
<svg style="left:14.5px;top:630px;" width="26" height="26" viewBox="0 0 26 26"><path d="M9.9 3.8 L20.4 7.8 V22 H3.9 V12.8z" fill="#92d5a9" stroke="#92d5a9" stroke-width="1.4" stroke-linejoin="round"/><g fill="#f4f4f4"><circle cx="9.9" cy="3.8" r="1.6"/><circle cx="20.4" cy="7.8" r="1.6"/><circle cx="20.4" cy="22" r="1.6"/><circle cx="3.9" cy="22" r="1.6"/><circle cx="3.9" cy="12.8" r="1.6"/></g></svg>
<div style="left:59.5px;top:398px;width:270.3px;height:259.7px;background:#181818;border-radius:4px;"></div>
<svg style="left:66.5px;top:406.5px;" width="10" height="8" viewBox="0 0 10 8"><path d="M1.2 1.6 L5 5.6 L8.8 1.6" fill="none" stroke="#c4c4c4" stroke-width="1.1" stroke-linecap="round" stroke-linejoin="round"/></svg>
<span class="t" style="left:80.5px;top:402.2px;font-size:10.62px;color:#c8c8c8;letter-spacing:0.501px;">Add Circle</span>
<div style="left:173px;top:429.6px;width:149px;height:18.2px;background:#545454;border-radius:4px;"></div>
<span class="t" style="left:122.9px;top:430.3px;font-size:10.62px;color:#c0c0c0;letter-spacing:0.532px;">Vertices</span>
<span class="t" style="left:239.9px;top:430.3px;font-size:10.62px;color:#dedede;letter-spacing:1.787px;">32</span>
<div style="left:173px;top:450.5px;width:149px;height:18.2px;background:#545454;border-radius:4px;"></div>
<span class="t" style="left:132px;top:451.2px;font-size:10.62px;color:#c0c0c0;letter-spacing:-0.132px;">Radius</span>
<span class="t" style="left:228.55px;top:451.2px;font-size:10.62px;color:#dedede;letter-spacing:0.847px;">0.04 m</span>
<div style="left:173px;top:471.5px;width:149px;height:18.4px;background:#282828;border-radius:4px;box-shadow:inset 0 0 0 1px #3f3f3f;"></div>
<span class="t" style="left:121.8px;top:472.3px;font-size:10.62px;color:#c0c0c0;letter-spacing:0.406px;">Fill Type</span>
<span class="t" style="left:181px;top:472.3px;font-size:10.62px;color:#dedede;letter-spacing:0.383px;">Nothing</span>
<svg style="left:311.5px;top:479.1px;" width="7.6" height="4.8" viewBox="0 0 7.6 4.8"><path d="M1 1 L3.8 3.8 L6.6 1" fill="none" stroke="#d8d8d8" stroke-width="1.3" stroke-linecap="round" stroke-linejoin="round"/></svg>
<div style="left:173.5px;top:494.7px;width:13.2px;height:13.6px;background:#4772b3;border-radius:3px;"></div>
<svg style="left:175px;top:496.5px;" width="11" height="10" viewBox="0 0 11 10"><path d="M1.8 5 L4.4 7.8 L9.2 1.8" fill="none" stroke="#fff" stroke-width="1.7" stroke-linecap="round" stroke-linejoin="round"/></svg>
<span class="t" style="left:190px;top:493px;font-size:10.62px;color:#dedede;letter-spacing:0.264px;">Generate UVs</span>
<div style="left:173px;top:513px;width:149px;height:18.4px;background:#282828;border-radius:4px;box-shadow:inset 0 0 0 1px #3f3f3f;"></div>
<span class="t" style="left:139px;top:514.1px;font-size:10.62px;color:#c0c0c0;letter-spacing:0.446px;">Align</span>
<span class="t" style="left:181px;top:514.1px;font-size:10.62px;color:#dedede;letter-spacing:0.690px;">World</span>
<svg style="left:311.5px;top:520.6px;" width="7.6" height="4.8" viewBox="0 0 7.6 4.8"><path d="M1 1 L3.8 3.8 L6.6 1" fill="none" stroke="#d8d8d8" stroke-width="1.3" stroke-linecap="round" stroke-linejoin="round"/></svg>
<div style="left:173px;top:534px;width:149px;height:18.2px;background:#545454;border-radius:4px 4px 0 0;"></div>
<span class="t" style="left:111.8px;top:535.1px;font-size:10.62px;color:#c0c0c0;letter-spacing:0.268px;">Location X</span>
<span class="t" style="left:228.55px;top:535.1px;font-size:10.62px;color:#dedede;letter-spacing:0.847px;">0.64 m</span>
<div style="left:173px;top:553.2px;width:149px;height:18px;background:#545454;"></div>
<span class="t" style="left:157.808px;top:554.1px;font-size:10.62px;color:#c0c0c0;">Y</span>
<span class="t" style="left:228.55px;top:554.1px;font-size:10.62px;color:#dedede;letter-spacing:0.847px;">0.52 m</span>
<div style="left:173px;top:572.2px;width:149px;height:18.5px;background:#545454;border-radius:0 0 4px 4px;"></div>
<span class="t" style="left:158.306px;top:573.4px;font-size:10.62px;color:#c0c0c0;">Z</span>
<span class="t" style="left:222.65px;top:573.4px;font-size:10.62px;color:#dedede;letter-spacing:1.170px;">-0.135 m</span>
<div style="left:173px;top:593.6px;width:149px;height:18px;background:#545454;border-radius:4px 4px 0 0;"></div>
<span class="t" style="left:114.6px;top:594.2px;font-size:10.62px;color:#c0c0c0;letter-spacing:0.023px;">Rotation X</span>
<span class="t" style="left:235.35px;top:594.2px;font-size:10.62px;color:#dedede;letter-spacing:1.768px;">-90°</span>
<div style="left:173px;top:612.6px;width:149px;height:18px;background:#545454;"></div>
<span class="t" style="left:157.808px;top:613.5px;font-size:10.62px;color:#c0c0c0;">Y</span>
<span class="t" style="left:241.4px;top:613.5px;font-size:10.62px;color:#dedede;letter-spacing:1.647px;">0°</span>
<div style="left:173px;top:631.6px;width:149px;height:18.7px;background:#545454;border-radius:0 0 4px 4px;"></div>
<span class="t" style="left:158.306px;top:632.8px;font-size:10.62px;color:#c0c0c0;">Z</span>
<span class="t" style="left:241.4px;top:632.8px;font-size:10.62px;color:#dedede;letter-spacing:1.647px;">0°</span>
<div style="left:0px;top:0px;width:1280px;height:1px;background:#4b4b4b;"></div>
<div style="left:6.8px;top:5.8px;width:10.4px;height:10.4px;background:#ee6a5f;border-radius:5.2px;"></div>
<div style="left:22.8px;top:5.8px;width:10.4px;height:10.4px;background:#f5bd4f;border-radius:5.2px;"></div>
<div style="left:38.8px;top:5.8px;width:10.4px;height:10.4px;background:#61c454;border-radius:5.2px;"></div>
<div style="left:10.5px;top:9.5px;width:3px;height:3px;background:#8f1d12;border-radius:1.5px;"></div>
<svg style="left:547px;top:5px;" width="10" height="12" viewBox="0 0 10 12"><path d="M0.8 0.5 H6.2 L9.3 3.6 V11 a0.6 0.6 0 0 1 -0.6 0.6 H0.8 a0.6 0.6 0 0 1 -0.6 -0.6 V1.1 a0.6 0.6 0 0 1 0.6 -0.6z" fill="#8e8e8e"/><path d="M6.2 0.5 V3.6 H9.3z" fill="#c4c4c4"/><circle cx="4.8" cy="7" r="1.5" fill="#b7843c"/><path d="M2.3 6.4 L5 6.8" stroke="#b7843c" stroke-width="0.8"/></svg>
<span class="t" style="left:561.5px;top:3px;font-size:10.62px;color:#b4b4b4;letter-spacing:0.106px;font-weight:700;">* Room.blend - Blender 4.5.1 LTS</span>
<svg style="left:9.5px;top:27px;" width="17" height="16" viewBox="0 0 17 16"><g fill="none" stroke="#e6e6e6" stroke-linecap="round"><path d="M1.3 11.9 L7.6 7.6" stroke-width="2.1"/><path d="M3.8 6.2 H9.6" stroke-width="1.8"/><path d="M7.6 2.4 L11.6 5.4" stroke-width="1.8"/></g><ellipse cx="10.8" cy="9.6" rx="5.3" ry="4.9" fill="#e6e6e6"/><ellipse cx="10.9" cy="9.5" rx="3" ry="2.7" fill="#181818"/><ellipse cx="10.9" cy="9.5" rx="1.8" ry="1.6" fill="#e6e6e6"/></svg>
<span class="t" style="left:34.5px;top:27px;font-size:10.62px;color:#e2e2e2;letter-spacing:0.296px;">File</span>
<span class="t" style="left:67.5px;top:27px;font-size:10.62px;color:#e2e2e2;letter-spacing:0.067px;">Edit</span>
<span class="t" style="left:101px;top:27px;font-size:10.62px;color:#e2e2e2;letter-spacing:0.234px;">Render</span>
<span class="t" style="left:152px;top:27px;font-size:10.62px;color:#e2e2e2;letter-spacing:0.446px;">Window</span>
<span class="t" style="left:207.5px;top:27px;font-size:10.62px;color:#e2e2e2;letter-spacing:0.553px;">Help</span>
<div style="left:253px;top:27.5px;width:52px;height:20px;background:#303030;border-radius:4px 4px 0 0;"></div>
<span class="t" style="left:262.5px;top:29.3px;font-size:10.62px;color:#ffffff;letter-spacing:0.123px;">Layout</span>
<span class="t" style="left:315.5px;top:29.3px;font-size:10.62px;color:#9b9b9b;letter-spacing:0.486px;">Modeling</span>
<span class="t" style="left:382px;top:29.3px;font-size:10.62px;color:#9b9b9b;letter-spacing:0.414px;">Sculpting</span>
<span class="t" style="left:449px;top:29.3px;font-size:10.62px;color:#9b9b9b;letter-spacing:0.147px;">UV Editing</span>
<span class="t" style="left:520.5px;top:29.3px;font-size:10.62px;color:#9b9b9b;letter-spacing:0.293px;">Texture Paint</span>
<span class="t" style="left:606.5px;top:29.3px;font-size:10.62px;color:#9b9b9b;letter-spacing:0.088px;">Shading</span>
<span class="t" style="left:665.5px;top:29.3px;font-size:10.62px;color:#9b9b9b;letter-spacing:0.284px;">Animation</span>
<span class="t" style="left:735px;top:29.3px;font-size:10.62px;color:#9b9b9b;letter-spacing:0.250px;">Rendering</span>
<span class="t" style="left:805.5px;top:29.3px;font-size:10.62px;color:#9b9b9b;letter-spacing:0.447px;">Compositing</span>
<span class="t" style="left:888px;top:29.3px;font-size:10.62px;color:#9b9b9b;letter-spacing:0.441px;">Geometry Nodes</span>
<div style="left:941px;top:26px;width:8px;height:21px;background:linear-gradient(90deg,rgba(24,24,24,0),rgba(24,24,24,0.55));"></div>
<div style="left:948.5px;top:24px;width:332px;height:23.5px;background:#181818;"></div>
<div style="left:955px;top:26px;width:165.5px;height:18.6px;background:#282828;border-radius:4px;box-shadow:0 0 0 0.8px #333;"></div>
<div style="left:986px;top:26.5px;width:114.5px;height:17.6px;background:#1d1d1d;"></div>
<div style="left:1082px;top:26.5px;width:0px;height:0px;background:none;"></div>
<div style="left:1082.5px;top:26.5px;width:18.5px;height:17.6px;background:#545454;"></div>
<div style="left:1101.5px;top:26.5px;width:19px;height:17.6px;background:#3a3a3a;border-radius:0 4px 4px 0;"></div>
<span class="t" style="left:993.5px;top:27.3px;font-size:10.62px;color:#e0e0e0;letter-spacing:0.347px;">Scene</span>
<svg style="left:976px;top:33.5px;" width="8" height="5" viewBox="0 0 8 5"><path d="M1 1 L4 4 L7 1" fill="none" stroke="#d0d0d0" stroke-width="1.3" stroke-linecap="round" stroke-linejoin="round"/></svg>
<div style="left:1125.3px;top:26px;width:145.5px;height:18.6px;background:#282828;border-radius:4px;box-shadow:0 0 0 0.8px #333;"></div>
<div style="left:1155.5px;top:26.5px;width:76.3px;height:17.6px;background:#1d1d1d;"></div>
<div style="left:1232px;top:26.5px;width:19px;height:17.6px;background:#545454;"></div>
<div style="left:1251.5px;top:26.5px;width:19.3px;height:17.6px;background:#3a3a3a;border-radius:0 4px 4px 0;"></div>
<span class="t" style="left:1163px;top:27.3px;font-size:10.62px;color:#e0e0e0;letter-spacing:0.263px;">ViewLayer</span>
<svg style="left:1145.5px;top:33.5px;" width="8" height="5" viewBox="0 0 8 5"><path d="M1 1 L4 4 L7 1" fill="none" stroke="#d0d0d0" stroke-width="1.3" stroke-linecap="round" stroke-linejoin="round"/></svg>
<svg style="left:1107px;top:31.3px;" width="8" height="8" viewBox="0 0 8 8"><path d="M0.8 0.8 L7.2 7.2 M7.2 0.8 L0.8 7.2" stroke="#5a5a5a" stroke-width="1" fill="none"/></svg>
<svg style="left:1257px;top:31.3px;" width="8" height="8" viewBox="0 0 8 8"><path d="M0.8 0.8 L7.2 7.2 M7.2 0.8 L0.8 7.2" stroke="#5a5a5a" stroke-width="1" fill="none"/></svg>
<svg style="left:1085.2px;top:28.3px;" width="13" height="14" viewBox="0 0 13 14"><path d="M4.2 1 H9 L12 4 V9.6 a0.9 0.9 0 0 1 -0.9 0.9 H4.9 a0.9 0.9 0 0 1 -0.9 -0.9 V1.9 a0.9 0.9 0 0 1 0.9 -0.9z" fill="none" stroke="#d6d6d6" stroke-width="1.1"/><path d="M9 1 L12 4 H9z" fill="#e8e8e8"/><path d="M1.6 4.2 V12.2 a0.8 0.8 0 0 0 0.8 0.8 H8.4" fill="none" stroke="#c4c4c4" stroke-width="1.1"/></svg>
<svg style="left:1235px;top:28.3px;" width="13" height="14" viewBox="0 0 13 14"><path d="M4.2 1 H9 L12 4 V9.6 a0.9 0.9 0 0 1 -0.9 0.9 H4.9 a0.9 0.9 0 0 1 -0.9 -0.9 V1.9 a0.9 0.9 0 0 1 0.9 -0.9z" fill="none" stroke="#d6d6d6" stroke-width="1.1"/><path d="M9 1 L12 4 H9z" fill="#e8e8e8"/><path d="M1.6 4.2 V12.2 a0.8 0.8 0 0 0 0.8 0.8 H8.4" fill="none" stroke="#c4c4c4" stroke-width="1.1"/></svg>
<svg style="left:1064px;top:28px;" width="16" height="16" viewBox="0 0 16 16"><g fill="none" stroke="#a9a9a9" stroke-width="1.1" stroke-linejoin="round" stroke-linecap="round"><path d="M9.3 1.6 L14.2 6.5 L12.6 7.1 L10.4 9.3 L10.2 12 L3.9 5.7 L6.6 5.5 L8.8 3.3z"/><path d="M7 9 L1.6 14.4"/></g></svg>
<svg style="left:957px;top:27px;" width="19" height="17" viewBox="0 0 19 17"><path d="M6 1 L10.4 12.8 H1.6z" fill="#e2e2e2"/><path d="M6 1 L8 12.8 H1.6z" fill="#bdbdbd"/><circle cx="14.5" cy="3.2" r="2.1" fill="#e8e8e8"/><circle cx="12.6" cy="11.5" r="3.3" fill="#282828" stroke="#e0e0e0" stroke-width="1.3"/></svg>
<svg style="left:1129px;top:27.5px;" width="17" height="16" viewBox="0 0 17 16"><path d="M1.2 4.8 V14.6 H10.8" fill="none" stroke="#777" stroke-width="1.1"/><path d="M2.9 3.2 V13 H12.4" fill="none" stroke="#9a9a9a" stroke-width="1.1"/><rect x="4.7" y="1" width="10.2" height="10.2" rx="1.2" fill="none" stroke="#e0e0e0" stroke-width="1.2"/><path d="M5.6 10.2 L9 4.8 L11.2 8 L12.4 6.8 L14.2 10.2z" fill="#e6e6e6"/><circle cx="12.8" cy="3.4" r="0.9" fill="#e6e6e6"/></svg>
<div style="left:920.2px;top:48.2px;width:356.8px;height:200.4px;background:#282828;border-radius:5px;overflow:hidden;">
<svg style="left:6.8px;top:25.3px;" width="7" height="7" viewBox="0 0 7 7"><circle cx="3.3" cy="3.1" r="2.3" fill="#e8e8e8"/></svg>
<svg style="left:44.3px;top:22.3px;" width="8" height="12" viewBox="0 0 8 12"><path d="M1.9 2 L5.8 6 L1.9 10" fill="none" stroke="#b4b4b4" stroke-width="1.15" stroke-linecap="round" stroke-linejoin="round"/></svg>
<svg style="left:60.8px;top:20.3px;" width="15" height="16" viewBox="0 0 15 16"><path d="M1.7 2.2 H12.6 L7.15 13z" fill="none" stroke="#dc9450" stroke-width="2.7" stroke-linejoin="round"/></svg>
<span class="t" style="left:81.1px;top:21.2px;font-size:10.62px;color:#c6c6c6;letter-spacing:0.706px;">Cube.004</span>
<svg style="left:153.8px;top:18.9px;" width="16" height="17" viewBox="0 0 16 17"><path d="M1.6 12.6 A1.9 1.9 0 0 0 4.4 15.2 L9.2 9.6 A4.2 4.2 0 0 0 14.4 4.6 L11.8 7 L9.6 6.4 L9.2 4.2 L11.6 1.8 A4.2 4.2 0 0 0 6.6 7 z" fill="none" stroke="#6f87cc" stroke-width="1.2" stroke-linejoin="round"/></svg>
<svg style="left:173.8px;top:20.1px;" width="16" height="16" viewBox="0 0 16 16"><g fill="none" stroke="#3fb88d" stroke-width="1.2"><rect x="0.8" y="0.9" width="3.4" height="3.4"/><rect x="11" y="0.9" width="3.4" height="3.4"/><rect x="5.9" y="11.2" width="3.4" height="3.4"/><path d="M4.2 2.6 H11 M3.2 4.3 L6.6 11.2 M12 4.3 L8.6 11.2"/></g></svg>
<svg style="left:294.4px;top:21.3px;" width="14" height="14" viewBox="0 0 14 14"><path d="M1 1.4 L12.6 5.6 L7.6 7.4 L5.4 12.8z" fill="#ececec"/></svg>
<svg style="left:313.2px;top:22.7px;" width="15" height="11" viewBox="0 0 15 11"><path d="M0.6 5.4 C3 0.4 11.6 0.4 14.2 5.4 C11.6 10.4 3 10.4 0.6 5.4z" fill="#ececec"/><circle cx="7.4" cy="5.4" r="3.1" fill="#282828"/><circle cx="7.4" cy="5.4" r="1.6" fill="#ececec"/></svg>
<svg style="left:332.8px;top:21.7px;" width="14" height="12" viewBox="0 0 14 12"><path d="M0.4 2.6 H3.6 L4.8 0.8 H9.2 L10.4 2.6 H13.6 V11.2 H0.4z" fill="#ececec"/><circle cx="7" cy="6.6" r="3.3" fill="none" stroke="#282828" stroke-width="1.1"/><circle cx="7" cy="6.6" r="1.3" fill="#282828"/></svg>
<div style="left:0px;top:37.93px;width:356.8px;height:19.26px;background:#2b2b2b;"></div>
<svg style="left:6.8px;top:44.56px;" width="7" height="7" viewBox="0 0 7 7"><circle cx="3.3" cy="3.1" r="2.3" fill="#e8e8e8"/></svg>
<svg style="left:44.3px;top:41.56px;" width="8" height="12" viewBox="0 0 8 12"><path d="M1.9 2 L5.8 6 L1.9 10" fill="none" stroke="#b4b4b4" stroke-width="1.15" stroke-linecap="round" stroke-linejoin="round"/></svg>
<svg style="left:60.8px;top:39.56px;" width="15" height="16" viewBox="0 0 15 16"><path d="M1.7 2.2 H12.6 L7.15 13z" fill="none" stroke="#dc9450" stroke-width="2.7" stroke-linejoin="round"/></svg>
<span class="t" style="left:81.1px;top:40.46px;font-size:10.62px;color:#c6c6c6;letter-spacing:0.706px;">Cube.005</span>
<svg style="left:153.8px;top:38.16px;" width="16" height="17" viewBox="0 0 16 17"><path d="M1.6 12.6 A1.9 1.9 0 0 0 4.4 15.2 L9.2 9.6 A4.2 4.2 0 0 0 14.4 4.6 L11.8 7 L9.6 6.4 L9.2 4.2 L11.6 1.8 A4.2 4.2 0 0 0 6.6 7 z" fill="none" stroke="#6f87cc" stroke-width="1.2" stroke-linejoin="round"/></svg>
<svg style="left:173.8px;top:39.36px;" width="16" height="16" viewBox="0 0 16 16"><g fill="none" stroke="#3fb88d" stroke-width="1.2"><rect x="0.8" y="0.9" width="3.4" height="3.4"/><rect x="11" y="0.9" width="3.4" height="3.4"/><rect x="5.9" y="11.2" width="3.4" height="3.4"/><path d="M4.2 2.6 H11 M3.2 4.3 L6.6 11.2 M12 4.3 L8.6 11.2"/></g></svg>
<svg style="left:294.4px;top:40.56px;" width="14" height="14" viewBox="0 0 14 14"><path d="M1 1.4 L12.6 5.6 L7.6 7.4 L5.4 12.8z" fill="#ececec"/></svg>
<svg style="left:313.2px;top:41.96px;" width="15" height="11" viewBox="0 0 15 11"><path d="M0.6 5.4 C3 0.4 11.6 0.4 14.2 5.4 C11.6 10.4 3 10.4 0.6 5.4z" fill="#ececec"/><circle cx="7.4" cy="5.4" r="3.1" fill="#282828"/><circle cx="7.4" cy="5.4" r="1.6" fill="#ececec"/></svg>
<svg style="left:332.8px;top:40.96px;" width="14" height="12" viewBox="0 0 14 12"><path d="M0.4 2.6 H3.6 L4.8 0.8 H9.2 L10.4 2.6 H13.6 V11.2 H0.4z" fill="#ececec"/><circle cx="7" cy="6.6" r="3.3" fill="none" stroke="#282828" stroke-width="1.1"/><circle cx="7" cy="6.6" r="1.3" fill="#282828"/></svg>
<svg style="left:6.8px;top:63.82px;" width="7" height="7" viewBox="0 0 7 7"><circle cx="3.3" cy="3.1" r="2.3" fill="#e8e8e8"/></svg>
<svg style="left:44.3px;top:60.82px;" width="8" height="12" viewBox="0 0 8 12"><path d="M1.9 2 L5.8 6 L1.9 10" fill="none" stroke="#b4b4b4" stroke-width="1.15" stroke-linecap="round" stroke-linejoin="round"/></svg>
<svg style="left:60.8px;top:58.82px;" width="15" height="16" viewBox="0 0 15 16"><path d="M1.7 2.2 H12.6 L7.15 13z" fill="none" stroke="#dc9450" stroke-width="2.7" stroke-linejoin="round"/></svg>
<span class="t" style="left:81.1px;top:59.72px;font-size:10.62px;color:#c6c6c6;letter-spacing:0.706px;">Cube.006</span>
<svg style="left:154.4px;top:58.62px;" width="16" height="16" viewBox="0 0 16 16"><g fill="none" stroke="#3fb88d" stroke-width="1.2"><rect x="0.8" y="0.9" width="3.4" height="3.4"/><rect x="11" y="0.9" width="3.4" height="3.4"/><rect x="5.9" y="11.2" width="3.4" height="3.4"/><path d="M4.2 2.6 H11 M3.2 4.3 L6.6 11.2 M12 4.3 L8.6 11.2"/></g></svg>
<svg style="left:294.4px;top:59.82px;" width="14" height="14" viewBox="0 0 14 14"><path d="M1 1.4 L12.6 5.6 L7.6 7.4 L5.4 12.8z" fill="#ececec"/></svg>
<svg style="left:313.2px;top:61.22px;" width="15" height="11" viewBox="0 0 15 11"><path d="M0.6 5.4 C3 0.4 11.6 0.4 14.2 5.4 C11.6 10.4 3 10.4 0.6 5.4z" fill="#ececec"/><circle cx="7.4" cy="5.4" r="3.1" fill="#282828"/><circle cx="7.4" cy="5.4" r="1.6" fill="#ececec"/></svg>
<svg style="left:332.8px;top:60.22px;" width="14" height="12" viewBox="0 0 14 12"><path d="M0.4 2.6 H3.6 L4.8 0.8 H9.2 L10.4 2.6 H13.6 V11.2 H0.4z" fill="#ececec"/><circle cx="7" cy="6.6" r="3.3" fill="none" stroke="#282828" stroke-width="1.1"/><circle cx="7" cy="6.6" r="1.3" fill="#282828"/></svg>
<div style="left:0px;top:76.45px;width:356.8px;height:19.26px;background:#2b2b2b;"></div>
<svg style="left:6.8px;top:83.08px;" width="7" height="7" viewBox="0 0 7 7"><circle cx="3.3" cy="3.1" r="2.3" fill="#e8e8e8"/></svg>
<svg style="left:44.3px;top:80.08px;" width="8" height="12" viewBox="0 0 8 12"><path d="M1.9 2 L5.8 6 L1.9 10" fill="none" stroke="#b4b4b4" stroke-width="1.15" stroke-linecap="round" stroke-linejoin="round"/></svg>
<svg style="left:60.8px;top:78.08px;" width="15" height="16" viewBox="0 0 15 16"><path d="M1.7 2.2 H12.6 L7.15 13z" fill="none" stroke="#dc9450" stroke-width="2.7" stroke-linejoin="round"/></svg>
<span class="t" style="left:81.1px;top:78.98px;font-size:10.62px;color:#c6c6c6;letter-spacing:0.706px;">Cube.007</span>
<svg style="left:154.4px;top:77.88px;" width="16" height="16" viewBox="0 0 16 16"><g fill="none" stroke="#3fb88d" stroke-width="1.2"><rect x="0.8" y="0.9" width="3.4" height="3.4"/><rect x="11" y="0.9" width="3.4" height="3.4"/><rect x="5.9" y="11.2" width="3.4" height="3.4"/><path d="M4.2 2.6 H11 M3.2 4.3 L6.6 11.2 M12 4.3 L8.6 11.2"/></g></svg>
<svg style="left:294.4px;top:79.08px;" width="14" height="14" viewBox="0 0 14 14"><path d="M1 1.4 L12.6 5.6 L7.6 7.4 L5.4 12.8z" fill="#ececec"/></svg>
<svg style="left:313.2px;top:80.48px;" width="15" height="11" viewBox="0 0 15 11"><path d="M0.6 5.4 C3 0.4 11.6 0.4 14.2 5.4 C11.6 10.4 3 10.4 0.6 5.4z" fill="#ececec"/><circle cx="7.4" cy="5.4" r="3.1" fill="#282828"/><circle cx="7.4" cy="5.4" r="1.6" fill="#ececec"/></svg>
<svg style="left:332.8px;top:79.48px;" width="14" height="12" viewBox="0 0 14 12"><path d="M0.4 2.6 H3.6 L4.8 0.8 H9.2 L10.4 2.6 H13.6 V11.2 H0.4z" fill="#ececec"/><circle cx="7" cy="6.6" r="3.3" fill="none" stroke="#282828" stroke-width="1.1"/><circle cx="7" cy="6.6" r="1.3" fill="#282828"/></svg>
<svg style="left:6.8px;top:102.34px;" width="7" height="7" viewBox="0 0 7 7"><circle cx="3.3" cy="3.1" r="2.3" fill="#e8e8e8"/></svg>
<svg style="left:44.3px;top:99.34px;" width="8" height="12" viewBox="0 0 8 12"><path d="M1.9 2 L5.8 6 L1.9 10" fill="none" stroke="#b4b4b4" stroke-width="1.15" stroke-linecap="round" stroke-linejoin="round"/></svg>
<svg style="left:60.8px;top:97.34px;" width="15" height="16" viewBox="0 0 15 16"><path d="M1.7 2.2 H12.6 L7.15 13z" fill="none" stroke="#dc9450" stroke-width="2.7" stroke-linejoin="round"/></svg>
<span class="t" style="left:81.1px;top:98.24px;font-size:10.62px;color:#c6c6c6;letter-spacing:0.706px;">Cube.008</span>
<svg style="left:154.4px;top:97.14px;" width="16" height="16" viewBox="0 0 16 16"><g fill="none" stroke="#3fb88d" stroke-width="1.2"><rect x="0.8" y="0.9" width="3.4" height="3.4"/><rect x="11" y="0.9" width="3.4" height="3.4"/><rect x="5.9" y="11.2" width="3.4" height="3.4"/><path d="M4.2 2.6 H11 M3.2 4.3 L6.6 11.2 M12 4.3 L8.6 11.2"/></g></svg>
<svg style="left:294.4px;top:98.34px;" width="14" height="14" viewBox="0 0 14 14"><path d="M1 1.4 L12.6 5.6 L7.6 7.4 L5.4 12.8z" fill="#ececec"/></svg>
<svg style="left:313.2px;top:99.74px;" width="15" height="11" viewBox="0 0 15 11"><path d="M0.6 5.4 C3 0.4 11.6 0.4 14.2 5.4 C11.6 10.4 3 10.4 0.6 5.4z" fill="#ececec"/><circle cx="7.4" cy="5.4" r="3.1" fill="#282828"/><circle cx="7.4" cy="5.4" r="1.6" fill="#ececec"/></svg>
<svg style="left:332.8px;top:98.74px;" width="14" height="12" viewBox="0 0 14 12"><path d="M0.4 2.6 H3.6 L4.8 0.8 H9.2 L10.4 2.6 H13.6 V11.2 H0.4z" fill="#ececec"/><circle cx="7" cy="6.6" r="3.3" fill="none" stroke="#282828" stroke-width="1.1"/><circle cx="7" cy="6.6" r="1.3" fill="#282828"/></svg>
<div style="left:0px;top:114.97px;width:356.8px;height:19.26px;background:#2b2b2b;"></div>
<svg style="left:6.8px;top:121.6px;" width="7" height="7" viewBox="0 0 7 7"><circle cx="3.3" cy="3.1" r="2.3" fill="#e8e8e8"/></svg>
<svg style="left:44.3px;top:118.6px;" width="8" height="12" viewBox="0 0 8 12"><path d="M1.9 2 L5.8 6 L1.9 10" fill="none" stroke="#b4b4b4" stroke-width="1.15" stroke-linecap="round" stroke-linejoin="round"/></svg>
<svg style="left:60.8px;top:116.6px;" width="15" height="16" viewBox="0 0 15 16"><path d="M1.7 2.2 H12.6 L7.15 13z" fill="none" stroke="#dc9450" stroke-width="2.7" stroke-linejoin="round"/></svg>
<span class="t" style="left:81.1px;top:117.5px;font-size:10.62px;color:#c6c6c6;letter-spacing:0.706px;">Cube.009</span>
<svg style="left:154.4px;top:116.4px;" width="16" height="16" viewBox="0 0 16 16"><g fill="none" stroke="#3fb88d" stroke-width="1.2"><rect x="0.8" y="0.9" width="3.4" height="3.4"/><rect x="11" y="0.9" width="3.4" height="3.4"/><rect x="5.9" y="11.2" width="3.4" height="3.4"/><path d="M4.2 2.6 H11 M3.2 4.3 L6.6 11.2 M12 4.3 L8.6 11.2"/></g></svg>
<svg style="left:294.4px;top:117.6px;" width="14" height="14" viewBox="0 0 14 14"><path d="M1 1.4 L12.6 5.6 L7.6 7.4 L5.4 12.8z" fill="#ececec"/></svg>
<svg style="left:313.2px;top:119px;" width="15" height="11" viewBox="0 0 15 11"><path d="M0.6 5.4 C3 0.4 11.6 0.4 14.2 5.4 C11.6 10.4 3 10.4 0.6 5.4z" fill="#ececec"/><circle cx="7.4" cy="5.4" r="3.1" fill="#282828"/><circle cx="7.4" cy="5.4" r="1.6" fill="#ececec"/></svg>
<svg style="left:332.8px;top:118px;" width="14" height="12" viewBox="0 0 14 12"><path d="M0.4 2.6 H3.6 L4.8 0.8 H9.2 L10.4 2.6 H13.6 V11.2 H0.4z" fill="#ececec"/><circle cx="7" cy="6.6" r="3.3" fill="none" stroke="#282828" stroke-width="1.1"/><circle cx="7" cy="6.6" r="1.3" fill="#282828"/></svg>
<svg style="left:6.8px;top:140.86px;" width="7" height="7" viewBox="0 0 7 7"><circle cx="3.3" cy="3.1" r="2.3" fill="#e8e8e8"/></svg>
<svg style="left:44.3px;top:137.86px;" width="8" height="12" viewBox="0 0 8 12"><path d="M1.9 2 L5.8 6 L1.9 10" fill="none" stroke="#b4b4b4" stroke-width="1.15" stroke-linecap="round" stroke-linejoin="round"/></svg>
<svg style="left:60.8px;top:135.86px;" width="15" height="16" viewBox="0 0 15 16"><path d="M1.7 2.2 H12.6 L7.15 13z" fill="none" stroke="#dc9450" stroke-width="2.7" stroke-linejoin="round"/></svg>
<span class="t" style="left:81.1px;top:136.76px;font-size:10.62px;color:#c6c6c6;letter-spacing:0.706px;">Cube.010</span>
<svg style="left:154.4px;top:135.66px;" width="16" height="16" viewBox="0 0 16 16"><g fill="none" stroke="#3fb88d" stroke-width="1.2"><rect x="0.8" y="0.9" width="3.4" height="3.4"/><rect x="11" y="0.9" width="3.4" height="3.4"/><rect x="5.9" y="11.2" width="3.4" height="3.4"/><path d="M4.2 2.6 H11 M3.2 4.3 L6.6 11.2 M12 4.3 L8.6 11.2"/></g></svg>
<svg style="left:294.4px;top:136.86px;" width="14" height="14" viewBox="0 0 14 14"><path d="M1 1.4 L12.6 5.6 L7.6 7.4 L5.4 12.8z" fill="#ececec"/></svg>
<svg style="left:313.2px;top:138.26px;" width="15" height="11" viewBox="0 0 15 11"><path d="M0.6 5.4 C3 0.4 11.6 0.4 14.2 5.4 C11.6 10.4 3 10.4 0.6 5.4z" fill="#ececec"/><circle cx="7.4" cy="5.4" r="3.1" fill="#282828"/><circle cx="7.4" cy="5.4" r="1.6" fill="#ececec"/></svg>
<svg style="left:332.8px;top:137.26px;" width="14" height="12" viewBox="0 0 14 12"><path d="M0.4 2.6 H3.6 L4.8 0.8 H9.2 L10.4 2.6 H13.6 V11.2 H0.4z" fill="#ececec"/><circle cx="7" cy="6.6" r="3.3" fill="none" stroke="#282828" stroke-width="1.1"/><circle cx="7" cy="6.6" r="1.3" fill="#282828"/></svg>
<div style="left:0px;top:153.49px;width:356.8px;height:19.26px;background:#3a4c7d;"></div>
<svg style="left:2.4px;top:155.52px;" width="16" height="16" viewBox="0 0 16 16"><g fill="none" stroke="#aab4cf" stroke-width="1"><path d="M2.6 4.4 V11.8 M4.4 13.6 H10 M12.2 6.2 V11.6 M4.4 2.6 H9"/><circle cx="2.6" cy="2.6" r="1.7"/><circle cx="2.6" cy="13.6" r="1.7"/><circle cx="12" cy="13.6" r="1.7"/></g><rect x="9.6" y="0.4" width="5" height="5" fill="#f2f2f2"/></svg>
<svg style="left:44.3px;top:157.12px;" width="8" height="12" viewBox="0 0 8 12"><path d="M1.9 2 L5.8 6 L1.9 10" fill="none" stroke="#b4b4b4" stroke-width="1.15" stroke-linecap="round" stroke-linejoin="round"/></svg>
<div style="left:58.6px;top:154.42px;width:19px;height:17.3px;background:rgba(255,255,255,0.24);border-radius:3.5px;"></div>
<svg style="left:60.8px;top:155.12px;" width="15" height="16" viewBox="0 0 15 16"><path d="M1.7 2.2 H12.6 L7.15 13z" fill="none" stroke="#dc9450" stroke-width="2.7" stroke-linejoin="round"/></svg>
<span class="t" style="left:81.1px;top:156.02px;font-size:10.62px;color:#e8aa3c;letter-spacing:0.819px;">Cube.011</span>
<div style="left:152.4px;top:154.42px;width:19px;height:17.3px;background:rgba(120,190,200,0.28);border-radius:3.5px;"></div>
<svg style="left:154.4px;top:154.92px;" width="16" height="16" viewBox="0 0 16 16"><g fill="none" stroke="#3fb88d" stroke-width="1.2"><rect x="0.8" y="0.9" width="3.4" height="3.4"/><rect x="11" y="0.9" width="3.4" height="3.4"/><rect x="5.9" y="11.2" width="3.4" height="3.4"/><path d="M4.2 2.6 H11 M3.2 4.3 L6.6 11.2 M12 4.3 L8.6 11.2"/></g></svg>
<svg style="left:294.4px;top:156.12px;" width="14" height="14" viewBox="0 0 14 14"><path d="M1 1.4 L12.6 5.6 L7.6 7.4 L5.4 12.8z" fill="#ececec"/></svg>
<svg style="left:313.2px;top:157.52px;" width="15" height="11" viewBox="0 0 15 11"><path d="M0.6 5.4 C3 0.4 11.6 0.4 14.2 5.4 C11.6 10.4 3 10.4 0.6 5.4z" fill="#ececec"/><circle cx="7.4" cy="5.4" r="3.1" fill="#282828"/><circle cx="7.4" cy="5.4" r="1.6" fill="#ececec"/></svg>
<svg style="left:332.8px;top:156.52px;" width="14" height="12" viewBox="0 0 14 12"><path d="M0.4 2.6 H3.6 L4.8 0.8 H9.2 L10.4 2.6 H13.6 V11.2 H0.4z" fill="#ececec"/><circle cx="7" cy="6.6" r="3.3" fill="none" stroke="#282828" stroke-width="1.1"/><circle cx="7" cy="6.6" r="1.3" fill="#282828"/></svg>
<svg style="left:6.8px;top:179.38px;" width="7" height="7" viewBox="0 0 7 7"><circle cx="3.3" cy="3.1" r="2.3" fill="#e8e8e8"/></svg>
<svg style="left:44.3px;top:176.38px;" width="8" height="12" viewBox="0 0 8 12"><path d="M1.9 2 L5.8 6 L1.9 10" fill="none" stroke="#b4b4b4" stroke-width="1.15" stroke-linecap="round" stroke-linejoin="round"/></svg>
<svg style="left:60.8px;top:174.38px;" width="15" height="16" viewBox="0 0 15 16"><path d="M1.7 2.2 H12.6 L7.15 13z" fill="none" stroke="#dc9450" stroke-width="2.7" stroke-linejoin="round"/></svg>
<span class="t" style="left:81.1px;top:175.28px;font-size:10.62px;color:#c6c6c6;letter-spacing:0.706px;">Cube.012</span>
<svg style="left:154.4px;top:174.18px;" width="16" height="16" viewBox="0 0 16 16"><g fill="none" stroke="#3fb88d" stroke-width="1.2"><rect x="0.8" y="0.9" width="3.4" height="3.4"/><rect x="11" y="0.9" width="3.4" height="3.4"/><rect x="5.9" y="11.2" width="3.4" height="3.4"/><path d="M4.2 2.6 H11 M3.2 4.3 L6.6 11.2 M12 4.3 L8.6 11.2"/></g></svg>
<svg style="left:294.4px;top:175.38px;" width="14" height="14" viewBox="0 0 14 14"><path d="M1 1.4 L12.6 5.6 L7.6 7.4 L5.4 12.8z" fill="#ececec"/></svg>
<svg style="left:313.2px;top:176.78px;" width="15" height="11" viewBox="0 0 15 11"><path d="M0.6 5.4 C3 0.4 11.6 0.4 14.2 5.4 C11.6 10.4 3 10.4 0.6 5.4z" fill="#ececec"/><circle cx="7.4" cy="5.4" r="3.1" fill="#282828"/><circle cx="7.4" cy="5.4" r="1.6" fill="#ececec"/></svg>
<svg style="left:332.8px;top:175.78px;" width="14" height="12" viewBox="0 0 14 12"><path d="M0.4 2.6 H3.6 L4.8 0.8 H9.2 L10.4 2.6 H13.6 V11.2 H0.4z" fill="#ececec"/><circle cx="7" cy="6.6" r="3.3" fill="none" stroke="#282828" stroke-width="1.1"/><circle cx="7" cy="6.6" r="1.3" fill="#282828"/></svg>
<div style="left:0px;top:192.01px;width:356.8px;height:19.26px;background:#2b2b2b;"></div>
<svg style="left:6.8px;top:198.64px;" width="7" height="7" viewBox="0 0 7 7"><circle cx="3.3" cy="3.1" r="2.3" fill="#e8e8e8"/></svg>
<svg style="left:44.3px;top:195.64px;" width="8" height="12" viewBox="0 0 8 12"><path d="M1.9 2 L5.8 6 L1.9 10" fill="none" stroke="#b4b4b4" stroke-width="1.15" stroke-linecap="round" stroke-linejoin="round"/></svg>
<svg style="left:60.8px;top:193.64px;" width="15" height="16" viewBox="0 0 15 16"><path d="M1.7 2.2 H12.6 L7.15 13z" fill="none" stroke="#dc9450" stroke-width="2.7" stroke-linejoin="round"/></svg>
<span class="t" style="left:81.1px;top:194.54px;font-size:10.62px;color:#c6c6c6;letter-spacing:0.496px;">Mirror</span>
<svg style="left:132.8px;top:193.44px;" width="16" height="16" viewBox="0 0 16 16"><g fill="none" stroke="#3fb88d" stroke-width="1.2"><circle cx="2.6" cy="2.6" r="1.8"/><circle cx="12.6" cy="2.6" r="1.8"/><path d="M4.4 2.6 H10.8 M3 4.4 L4.4 8 M12.2 4.4 L10.8 8"/></g></svg>
<svg style="left:294.4px;top:194.64px;" width="14" height="14" viewBox="0 0 14 14"><path d="M1 1.4 L12.6 5.6 L7.6 7.4 L5.4 12.8z" fill="#ececec"/></svg>
<svg style="left:313.2px;top:196.04px;" width="15" height="11" viewBox="0 0 15 11"><path d="M0.6 5.4 C3 0.4 11.6 0.4 14.2 5.4 C11.6 10.4 3 10.4 0.6 5.4z" fill="#ececec"/><circle cx="7.4" cy="5.4" r="3.1" fill="#282828"/><circle cx="7.4" cy="5.4" r="1.6" fill="#ececec"/></svg>
<svg style="left:332.8px;top:195.04px;" width="14" height="12" viewBox="0 0 14 12"><path d="M0.4 2.6 H3.6 L4.8 0.8 H9.2 L10.4 2.6 H13.6 V11.2 H0.4z" fill="#ececec"/><circle cx="7" cy="6.6" r="3.3" fill="none" stroke="#282828" stroke-width="1.1"/><circle cx="7" cy="6.6" r="1.3" fill="#282828"/></svg>
<div style="left:28.4px;top:17.8px;width:0.9px;height:183px;background:#4e4e4e;"></div>
<div style="left:353.1px;top:41.1px;width:2.2px;height:160px;background:#474747;border-radius:1px;"></div>
<div style="left:0px;top:0px;width:356.8px;height:24.2px;background:#2b2b2b;"></div>
<div style="left:8.4px;top:2.4px;width:29.4px;height:17.8px;background:#282828;border-radius:4px;box-shadow:0 0 0 0.8px #3b3b3b;"></div>
<div style="left:42.8px;top:2.4px;width:29.6px;height:17.8px;background:#282828;border-radius:4px;box-shadow:0 0 0 0.8px #3b3b3b;"></div>
<div style="left:112.6px;top:2.4px;width:113.4px;height:17.8px;background:#1d1d1d;border-radius:4px;box-shadow:0 0 0 0.8px #3b3b3b;"></div>
<div style="left:296.6px;top:2.4px;width:29.5px;height:17.8px;background:#282828;border-radius:4px;box-shadow:0 0 0 0.8px #3b3b3b;"></div>
<div style="left:331.2px;top:2.2px;width:18.6px;height:18.2px;background:#4f4f4f;border-radius:4px;"></div>
<svg style="left:11.3px;top:3.8px;" width="15" height="15" viewBox="0 0 15 15"><g fill="#e0e0e0"><rect x="0.6" y="0.8" width="5.2" height="2.6" rx="0.6"/><rect x="6.4" y="6.6" width="8" height="2.8" rx="0.6"/><rect x="6.4" y="11.4" width="8" height="2.8" rx="0.6"/></g><path d="M2.8 3.6 V12.8 H6 M2.8 8 H6" fill="none" stroke="#9a9a9a" stroke-width="1"/></svg>
<svg style="left:28px;top:9.8px;" width="7.6" height="4.8" viewBox="0 0 7.6 4.8"><path d="M1 1 L3.8 3.8 L6.6 1" fill="none" stroke="#d0d0d0" stroke-width="1.3" stroke-linecap="round" stroke-linejoin="round"/></svg>
<svg style="left:45.8px;top:3.2px;" width="17" height="16" viewBox="0 0 17 16"><path d="M1.2 4.8 V14.6 H10.8" fill="none" stroke="#777" stroke-width="1.1"/><path d="M2.9 3.2 V13 H12.4" fill="none" stroke="#9a9a9a" stroke-width="1.1"/><rect x="4.7" y="1" width="10.2" height="10.2" rx="1.2" fill="none" stroke="#e0e0e0" stroke-width="1.2"/><path d="M5.6 10.2 L9 4.8 L11.2 8 L12.4 6.8 L14.2 10.2z" fill="#e6e6e6"/><circle cx="12.8" cy="3.4" r="0.9" fill="#e6e6e6"/></svg>
<svg style="left:62.6px;top:9.8px;" width="7.6" height="4.8" viewBox="0 0 7.6 4.8"><path d="M1 1 L3.8 3.8 L6.6 1" fill="none" stroke="#d0d0d0" stroke-width="1.3" stroke-linecap="round" stroke-linejoin="round"/></svg>
<svg style="left:115.8px;top:3.8px;" width="14" height="15" viewBox="0 0 14 15"><circle cx="8.4" cy="5.6" r="4.4" fill="none" stroke="#d6d6d6" stroke-width="1.2"/><path d="M5.2 8.8 L1 13.4" stroke="#d6d6d6" stroke-width="1.4" stroke-linecap="round"/></svg>
<span class="t" style="left:138.1px;top:3.6px;font-size:10.62px;color:#6e6e6e;letter-spacing:0.210px;">Search</span>
<svg style="left:299.4px;top:4.4px;" width="15" height="14" viewBox="0 0 15 14"><path d="M1 1 H13.6 L8.8 6.6 V11.2 L5.8 13 V6.6z" fill="none" stroke="#dcdcdc" stroke-width="1.2" stroke-linejoin="round"/></svg>
<svg style="left:316.3px;top:10px;" width="7.6" height="4.8" viewBox="0 0 7.6 4.8"><path d="M1 1 L3.8 3.8 L6.6 1" fill="none" stroke="#d0d0d0" stroke-width="1.3" stroke-linecap="round" stroke-linejoin="round"/></svg>
<svg style="left:333.4px;top:3px;" width="15" height="16" viewBox="0 0 15 16"><g fill="none" stroke="#a4a4a4" stroke-width="1.1"><path d="M1.4 3.6 H8.4 M2.4 6.2 V14 H11.6 V8.6 M2.4 6.2 H8"/><path d="M5.4 9.6 H8.6" stroke-width="1.4"/></g><circle cx="11.6" cy="4" r="3.1" fill="#f0f0f0"/><path d="M11.6 2.2 V5.8 M9.8 4 H13.4" stroke="#4f4f4f" stroke-width="1"/></svg>
</div>
<div style="left:920.2px;top:252.1px;width:356.8px;height:439.4px;background:#303030;border-radius:5px;"></div>
<div style="left:920.2px;top:276.8px;width:26.6px;height:414.7px;background:#1c1c1c;border-radius:0 0 0 5px;"></div>
<div style="left:920.2px;top:276.8px;width:26.6px;height:34.6px;background:#222222;"></div>
<div style="left:922.2px;top:449.8px;width:22.6px;height:0.8px;background:#2a2a2a;"></div>
<div style="left:922.2px;top:484.4px;width:22.6px;height:0.8px;background:#2a2a2a;"></div>
<div style="left:923.4px;top:518.2px;width:23.4px;height:26.4px;background:#303030;border-radius:4px 0 0 4px;"></div>
<div style="left:929px;top:254.5px;width:29px;height:18.3px;background:#282828;border-radius:4px;box-shadow:0 0 0 0.8px #3b3b3b;"></div>
<svg style="left:931.4px;top:255.8px;" width="16" height="16" viewBox="0 0 16 16"><rect x="0.4" y="0.3" width="14.6" height="6.8" rx="3.4" fill="#ececec"/><rect x="0.4" y="8.5" width="14.6" height="6.8" rx="3.4" fill="#ececec"/><rect x="6.8" y="2.5" width="6.8" height="2.4" rx="1.2" fill="#222"/><path d="M6.8 1.1 H11.6 a2.6 2.6 0 0 1 0 5.2 H6.8" fill="none" stroke="#9a9a9a" stroke-width="0.9"/><circle cx="11.6" cy="11.9" r="1.9" fill="#222"/><path d="M9.2 9.3 H11.6 a2.6 2.6 0 0 1 0 5.2 H9.2" fill="none" stroke="#9a9a9a" stroke-width="0.9"/></svg>
<svg style="left:948px;top:261.9px;" width="7.6" height="4.8" viewBox="0 0 7.6 4.8"><path d="M1 1 L3.8 3.8 L6.6 1" fill="none" stroke="#d0d0d0" stroke-width="1.3" stroke-linecap="round" stroke-linejoin="round"/></svg>
<div style="left:1044.8px;top:254.4px;width:112.4px;height:17.8px;background:#1d1d1d;border-radius:4px;box-shadow:0 0 0 0.8px #3b3b3b;"></div>
<svg style="left:1047.6px;top:255.6px;" width="14" height="15" viewBox="0 0 14 15"><circle cx="8.4" cy="5.6" r="4.4" fill="none" stroke="#d6d6d6" stroke-width="1.2"/><path d="M5.2 8.8 L1 13.4" stroke="#d6d6d6" stroke-width="1.4" stroke-linecap="round"/></svg>
<span class="t" style="left:1069.5px;top:255.4px;font-size:10.62px;color:#6e6e6e;letter-spacing:0.230px;">Search</span>
<div style="left:1252px;top:254.4px;width:18.6px;height:17.8px;background:#282828;border-radius:4px;box-shadow:0 0 0 0.8px #3b3b3b;"></div>
<svg style="left:1257.5px;top:261.9px;" width="7.6" height="4.8" viewBox="0 0 7.6 4.8"><path d="M1 1 L3.8 3.8 L6.6 1" fill="none" stroke="#d0d0d0" stroke-width="1.3" stroke-linecap="round" stroke-linejoin="round"/></svg>
<svg style="left:956.6px;top:285.4px;" width="16" height="16" viewBox="0 0 16 16"><rect x="4" y="4" width="8" height="8" rx="0.8" fill="#ececec"/><path d="M1 4 V2.2 A1.2 1.2 0 0 1 2.2 1 H4 M12 1 H13.8 A1.2 1.2 0 0 1 15 2.2 V4 M15 12 V13.8 A1.2 1.2 0 0 1 13.8 15 H12 M4 15 H2.2 A1.2 1.2 0 0 1 1 13.8 V12" fill="none" stroke="#c8c8c8" stroke-width="1"/></svg>
<span class="t" style="left:979.5px;top:285.2px;font-size:10.62px;color:#e6e6e6;letter-spacing:0.833px;">Cube.011</span>
<svg style="left:1252.5px;top:285.5px;" width="16" height="16" viewBox="0 0 16 16"><g fill="none" stroke="#a9a9a9" stroke-width="1.1" stroke-linejoin="round" stroke-linecap="round"><path d="M9.3 1.6 L14.2 6.5 L12.6 7.1 L10.4 9.3 L10.2 12 L3.9 5.7 L6.6 5.5 L8.8 3.3z"/><path d="M7 9 L1.6 14.4"/></g></svg>
<div style="left:955.1px;top:318.4px;width:315.4px;height:18px;background:#545454;border-radius:4px;"></div>
<svg style="left:960.7px;top:322.4px;" width="10" height="10" viewBox="0 0 10 10"><path d="M5 0.6 V9.4 M0.6 5 H9.4" stroke="#e6e6e6" stroke-width="1.2"/></svg>
<span class="t" style="left:1088.8px;top:319px;font-size:10.62px;color:#e6e6e6;letter-spacing:0.444px;">Add Modifier</span>
<svg style="left:926px;top:289.2px;" width="16" height="16" viewBox="0 0 16 16"><path d="M3.4 1.4 V7.6" stroke="#dcdcdc" stroke-width="1.1" fill="none"/><path d="M1.3 9.6 a2.1 2.1 0 0 1 4.2 0 V12.4 a2.1 2.1 0 0 1 -4.2 0z" fill="#c4c4c4"/><path d="M9.2 1.2 V3.6 A2.6 2.6 0 0 0 14.4 3.6 V1.2" fill="none" stroke="#dcdcdc" stroke-width="1.5"/><path d="M11.8 6 V13.8" stroke="#dcdcdc" stroke-width="2.2" stroke-linecap="round" fill="none"/></svg>
<svg style="left:926px;top:323.2px;" width="16" height="16" viewBox="0 0 16 16"><rect x="1.2" y="4.2" width="13.6" height="10" rx="1.6" fill="none" stroke="#dcdcdc" stroke-width="1.3"/><path d="M4.4 4 V1.8 H8.4 V4" fill="none" stroke="#dcdcdc" stroke-width="1.2"/><rect x="3.4" y="6.6" width="7" height="5.4" fill="#1c1c1c" stroke="#9a9a9a" stroke-width="0.7"/><path d="M12.6 6.4 V12" stroke="#dcdcdc" stroke-width="1" stroke-dasharray="1 1"/><path d="M13 1 V3" stroke="#9a9a9a" stroke-width="0.8"/></svg>
<svg style="left:926px;top:349.4px;" width="16" height="16" viewBox="0 0 16 16"><path d="M1.4 8.4 V3.4 A1.4 1.4 0 0 1 2.8 2 H13.2 A1.4 1.4 0 0 1 14.6 3.4 V8.4z" fill="#dcdcdc"/><rect x="4" y="7.2" width="8" height="7.4" fill="#1c1c1c" stroke="#dcdcdc" stroke-width="1.1"/><path d="M5.4 13.2 L7.6 10 L9 11.8 L10 11 L10.8 13.2z" fill="#bdbdbd"/></svg>
<svg style="left:926px;top:376.2px;" width="16" height="16" viewBox="0 0 16 16"><path d="M1 5.2 V15 H10.4" fill="none" stroke="#6e6e6e" stroke-width="1.1"/><path d="M2.8 3.6 V13.2 H12.2" fill="none" stroke="#9a9a9a" stroke-width="1.1"/><rect x="4.6" y="1" width="10.4" height="10.4" rx="1.2" fill="none" stroke="#dcdcdc" stroke-width="1.2"/><path d="M5.6 10.4 L9 5 L11.2 8.2 L12.4 7 L14.2 10.4z" fill="#dcdcdc"/><circle cx="12.8" cy="3.4" r="0.9" fill="#dcdcdc"/></svg>
<svg style="left:926px;top:402px;" width="16" height="16" viewBox="0 0 16 16"><path d="M4.8 2 L8.4 12.4 H1.2z" fill="#d0d0d0"/><path d="M4.8 2 L6.4 12.4 H1.2z" fill="#a8a8a8"/><circle cx="11.6" cy="3.8" r="2" fill="#dcdcdc"/><circle cx="10.6" cy="11.6" r="3.1" fill="none" stroke="#dcdcdc" stroke-width="1.2"/></svg>
<svg style="left:926px;top:429px;" width="16" height="16" viewBox="0 0 16 16"><circle cx="8" cy="8.2" r="5.6" fill="none" stroke="#b95e68" stroke-width="1.2"/><path d="M4.4 5 C6 4.4 7.4 5.6 7 7 C6.6 8.4 4.8 8 4.4 9.6 C4 11 5.4 12.6 6.4 13 M10.4 4 C9.6 5.4 10.8 6.4 12 6.4 M9.6 9.4 C10.8 9 12.4 9.8 12.4 11" fill="none" stroke="#b95e68" stroke-width="1.5"/><path d="M1.8 13.6 C6 14.4 12 11 13.6 1.8" fill="none" stroke="#b95e68" stroke-width="1"/></svg>
<svg style="left:926px;top:463.5px;" width="16" height="16" viewBox="0 0 16 16"><rect x="1.6" y="1.6" width="12.8" height="3.6" rx="0.8" fill="none" stroke="#dcdcdc" stroke-width="1.2"/><path d="M2.8 5.4 V14.2 H13.2 V5.4" fill="none" stroke="#dcdcdc" stroke-width="1.2"/><rect x="6" y="8" width="4" height="2" fill="#dcdcdc"/></svg>
<svg style="left:926px;top:496.6px;" width="16" height="16" viewBox="0 0 16 16"><rect x="4" y="4" width="8" height="8" rx="0.8" fill="#e0964c"/><path d="M1 4 V2.2 A1.2 1.2 0 0 1 2.2 1 H4 M12 1 H13.8 A1.2 1.2 0 0 1 15 2.2 V4 M15 12 V13.8 A1.2 1.2 0 0 1 13.8 15 H12 M4 15 H2.2 A1.2 1.2 0 0 1 1 13.8 V12" fill="none" stroke="#9c6f42" stroke-width="1"/></svg>
<svg style="left:926px;top:523.2px;" width="16" height="16" viewBox="0 0 16 16"><path d="M1.8 12 A1.9 1.9 0 0 0 4.4 14.6 L9.4 9.4 A4.3 4.3 0 0 0 14.6 4.2 L12 6.8 L9.8 6.2 L9.2 4 L11.8 1.4 A4.3 4.3 0 0 0 6.6 6.6z" fill="#7c9ff2"/></svg>
<svg style="left:926px;top:549.6px;" width="16" height="16" viewBox="0 0 16 16"><g fill="#6f87cc"><circle cx="3.4" cy="3.4" r="2.2"/><circle cx="12.8" cy="3.4" r="1.5"/><circle cx="12.6" cy="12.6" r="1.5"/><circle cx="3.4" cy="13" r="1.1"/></g><path d="M3.4 3.4 H12.8 M3.4 3.4 L12.6 12.6 M3.4 3.4 V13" stroke="#6f87cc" stroke-width="1" fill="none"/></svg>
<svg style="left:926px;top:576.2px;" width="16" height="16" viewBox="0 0 16 16"><circle cx="7" cy="9" r="2.7" fill="#6f87cc"/><path d="M11.8 6.4 A5.8 5.8 0 1 1 7 3.2" fill="none" stroke="#6f87cc" stroke-width="1.2"/><circle cx="12.6" cy="3.4" r="1.7" fill="#6f87cc"/></svg>
<svg style="left:926px;top:602.8px;" width="16" height="16" viewBox="0 0 16 16"><path d="M2.4 7 L10.4 2.2 A2.7 2.7 0 0 1 14.2 5.8 L9.6 13.4 A4.7 4.7 0 1 1 2.4 7z" fill="none" stroke="#6f87cc" stroke-width="1.2"/><circle cx="5.6" cy="10.6" r="2.5" fill="none" stroke="#6f87cc" stroke-width="1.2"/><circle cx="5.6" cy="10.6" r="0.8" fill="#6f87cc"/><circle cx="12" cy="4.4" r="0.7" fill="#6f87cc"/></svg>
<svg style="left:926px;top:629.2px;" width="16" height="16" viewBox="0 0 16 16"><g fill="none" stroke="#3fb88d" stroke-width="1.3"><rect x="0.8" y="1.2" width="3.4" height="3.4"/><rect x="11.8" y="1.2" width="3.4" height="3.4"/><rect x="6.3" y="12" width="3.4" height="3.4"/><path d="M4.2 2.9 H11.8 M3.2 4.6 L7 12 M12.8 4.6 L9 12"/></g></svg>
<svg style="left:926px;top:655.6px;" width="16" height="16" viewBox="0 0 16 16"><circle cx="8" cy="8" r="6.6" fill="#b95e68"/><path d="M8 8 V1.8 A6.2 6.2 0 0 0 1.8 8 A6.2 6.2 0 0 0 2.4 10.4 C4.6 10.6 6.6 9.6 8 8z" fill="#1c1c1c"/><path d="M8 8 C9.8 9.8 12 10.4 13.6 10 A6.2 6.2 0 0 1 8 14.2z" fill="#1c1c1c"/></svg>
<div style="left:1.3px;top:665.8px;width:915.9px;height:25.6px;background:#303030;border-radius:5px;"></div>
<div style="left:8.5px;top:669px;width:30px;height:18.2px;background:#282828;border-radius:4px;box-shadow:0 0 0 0.8px #3a3a3a;"></div>
<svg style="left:12.5px;top:670.6px;" width="15" height="15" viewBox="0 0 15 15"><circle cx="7.4" cy="7.4" r="7.2" fill="#f0f0f0"/><path d="M9 3.4 L5.6 7.6 L8.2 11.2" fill="none" stroke="#2b2b2b" stroke-width="1.7" stroke-linecap="round" stroke-linejoin="round"/></svg>
<svg style="left:28.5px;top:676.6px;" width="7.6" height="4.8" viewBox="0 0 7.6 4.8"><path d="M1 1 L3.8 3.8 L6.6 1" fill="none" stroke="#d8d8d8" stroke-width="1.3" stroke-linecap="round" stroke-linejoin="round"/></svg>
<div style="left:43.3px;top:669px;width:68.6px;height:18.2px;background:#282828;border-radius:4px 0 0 4px;box-shadow:0 0 0 0.8px #3a3a3a;"></div>
<div style="left:112.4px;top:669px;width:58.2px;height:18.2px;background:#282828;border-radius:0 4px 4px 0;box-shadow:0 0 0 0.8px #3a3a3a;"></div>
<span class="t" style="left:50.5px;top:669.7px;font-size:10.62px;color:#e0e0e0;letter-spacing:0.201px;">Playback</span>
<svg style="left:101.7px;top:676.6px;" width="7.6" height="4.8" viewBox="0 0 7.6 4.8"><path d="M1 1 L3.8 3.8 L6.6 1" fill="none" stroke="#d8d8d8" stroke-width="1.3" stroke-linecap="round" stroke-linejoin="round"/></svg>
<span class="t" style="left:119.5px;top:669.7px;font-size:10.62px;color:#e0e0e0;letter-spacing:0.306px;">Keying</span>
<svg style="left:160.2px;top:676.6px;" width="7.6" height="4.8" viewBox="0 0 7.6 4.8"><path d="M1 1 L3.8 3.8 L6.6 1" fill="none" stroke="#d8d8d8" stroke-width="1.3" stroke-linecap="round" stroke-linejoin="round"/></svg>
<span class="t" style="left:180px;top:669.7px;font-size:10.62px;color:#e0e0e0;letter-spacing:0.558px;">View</span>
<span class="t" style="left:219.5px;top:669.7px;font-size:10.62px;color:#e0e0e0;letter-spacing:0.391px;">Marker</span>
<div style="left:370.5px;top:669px;width:17.6px;height:18.2px;background:#545454;border-radius:4px 0 0 4px;"></div>
<div style="left:388.5px;top:669px;width:18.6px;height:18.2px;background:#2b2b2b;border-radius:0 4px 4px 0;"></div>
<svg style="left:373.5px;top:672.3px;" width="12" height="12" viewBox="0 0 12 12"><circle cx="6" cy="6" r="4.7" fill="none" stroke="#cfcfcf" stroke-width="1.1"/></svg>
<svg style="left:394.2px;top:676.9px;" width="7.6" height="4.8" viewBox="0 0 7.6 4.8"><path d="M1 1 L3.8 3.8 L6.6 1" fill="none" stroke="#6a6a6a" stroke-width="1.1" stroke-linecap="round" stroke-linejoin="round"/></svg>
<div style="left:413px;top:669px;width:18.4px;height:18.2px;background:#545454;border-radius:4px 0 0 4px;"></div>
<div style="left:432.2px;top:669px;width:18.3px;height:18.2px;background:#545454;"></div>
<div style="left:451.3px;top:669px;width:18.5px;height:18.2px;background:#545454;"></div>
<div style="left:470.6px;top:669px;width:18.4px;height:18.2px;background:#545454;"></div>
<div style="left:489.8px;top:669px;width:18.4px;height:18.2px;background:#545454;"></div>
<div style="left:509px;top:669px;width:17.8px;height:18.2px;background:#545454;border-radius:0 4px 4px 0;"></div>
<svg style="left:413px;top:669px;" width="18.4" height="18.2" viewBox="0 0 18.4 18.2"><rect x="4.6" y="4.8" width="1.7" height="8.8" fill="#f2f2f2"/><path d="M13.4 4.8 V13.6 L7.4 9.2z" fill="#f2f2f2"/></svg>
<svg style="left:432.2px;top:669px;" width="18.4" height="18.2" viewBox="0 0 18.4 18.2"><path d="M5.6 5 L9.6 9.2 L5.6 13.4 L1.8 9.2z" fill="#f2f2f2"/><path d="M16.2 5.4 V13 L11 9.2z" fill="#f2f2f2"/></svg>
<svg style="left:451.3px;top:669px;" width="18.4" height="18.2" viewBox="0 0 18.4 18.2"><path d="M13.6 3.8 V14.6 L4 9.2z" fill="#f2f2f2"/></svg>
<svg style="left:470.6px;top:669px;" width="18.4" height="18.2" viewBox="0 0 18.4 18.2"><path d="M5 3.8 V14.6 L14.6 9.2z" fill="#f2f2f2"/></svg>
<svg style="left:489.8px;top:669px;" width="18.4" height="18.2" viewBox="0 0 18.4 18.2"><path d="M12.6 5 L16.6 9.2 L12.6 13.4 L8.6 9.2z" fill="#f2f2f2"/><path d="M2.2 5.4 V13 L7.4 9.2z" fill="#f2f2f2"/></svg>
<svg style="left:509px;top:669px;" width="18.4" height="18.2" viewBox="0 0 18.4 18.2"><rect x="12" y="4.8" width="1.7" height="8.8" fill="#f2f2f2"/><path d="M4.6 4.8 V13.6 L10.6 9.2z" fill="#f2f2f2"/></svg>
<div style="left:647px;top:669px;width:70.5px;height:18.2px;background:#545454;border-radius:4px;"></div>
<span class="t" style="left:674.7px;top:669.8px;font-size:10.62px;color:#e8e8e8;letter-spacing:1.987px;">56</span>
<div style="left:722.5px;top:669px;width:18px;height:18.2px;background:#545454;border-radius:4px 0 0 4px;"></div>
<div style="left:741.3px;top:669px;width:84.8px;height:18.2px;background:#545454;"></div>
<div style="left:826.9px;top:669px;width:82px;height:18.2px;background:#545454;border-radius:0 4px 4px 0;"></div>
<svg style="left:724.5px;top:669.8px;" width="15" height="17" viewBox="0 0 15 17"><circle cx="6.6" cy="9.4" r="5.5" fill="none" stroke="#e2e2e2" stroke-width="1.2"/><path d="M6.6 6.2 V9.6 H9.2 M4.6 1.6 H8.6 M6.6 1.6 V3.8 M11 3.8 L12.6 2.4" fill="none" stroke="#e2e2e2" stroke-width="1.2" stroke-linecap="round"/></svg>
<span class="t" style="left:756.5px;top:669.8px;font-size:10.62px;color:#e8e8e8;letter-spacing:0.143px;">Start</span>
<span class="t" style="left:805.647px;top:669.8px;font-size:10.62px;color:#e8e8e8;">1</span>
<span class="t" style="left:842px;top:669.8px;font-size:10.62px;color:#e8e8e8;letter-spacing:0.052px;">End</span>
<span class="t" style="left:874.3px;top:669.8px;font-size:10.62px;color:#e8e8e8;letter-spacing:1.640px;">250</span>
<svg style="left:9.6px;top:692.8px;" width="12" height="16.4" viewBox="0 0 12 16.4"><rect x="0.8" y="0.8" width="10.4" height="14.6" rx="3.4" fill="none" stroke="#8f8f8f" stroke-width="1.2"/><path d="M1.2 7.6 V4 A3 3 0 0 1 4.2 1.2 H5.6 V7.6z" fill="#8f8f8f"/></svg>
<svg style="left:123.2px;top:692.8px;" width="12" height="16.4" viewBox="0 0 12 16.4"><rect x="0.8" y="0.8" width="10.4" height="14.6" rx="3.4" fill="none" stroke="#8f8f8f" stroke-width="1.2"/><rect x="4.4" y="2.2" width="3.2" height="6" rx="1.4" fill="#a0a0a0"/></svg>
<svg style="left:199.4px;top:692.8px;" width="12" height="16.4" viewBox="0 0 12 16.4"><rect x="0.8" y="0.8" width="10.4" height="14.6" rx="3.4" fill="none" stroke="#8f8f8f" stroke-width="1.2"/><path d="M1 4 A3 3 0 0 1 4.2 1 H5.8 V7.8 H1z" fill="#181818" stroke="#a8a8a8" stroke-width="0.8"/></svg>
<span class="t" style="left:23.5px;top:693px;font-size:10.62px;color:#989898;letter-spacing:0.185px;">Pick Shortest Path</span>
<span class="t" style="left:137px;top:693px;font-size:10.62px;color:#989898;letter-spacing:0.402px;">Dolly View</span>
<span class="t" style="left:213px;top:693px;font-size:10.62px;color:#989898;letter-spacing:0.418px;">Extrude to Cursor or Add</span>
<span class="t" style="left:1239.3px;top:693px;font-size:10.62px;color:#989898;letter-spacing:0.520px;">4.5.1</span>
<div style="left:1px;top:0px;width:1px;height:712px;background:rgba(255,255,255,0.2);"></div>
<div style="left:1277px;top:0px;width:1px;height:712px;background:#464646;"></div>
<div style="left:0px;top:710.6px;width:1280px;height:1.4px;background:#5e5e5e;"></div>
</div></body></html>
